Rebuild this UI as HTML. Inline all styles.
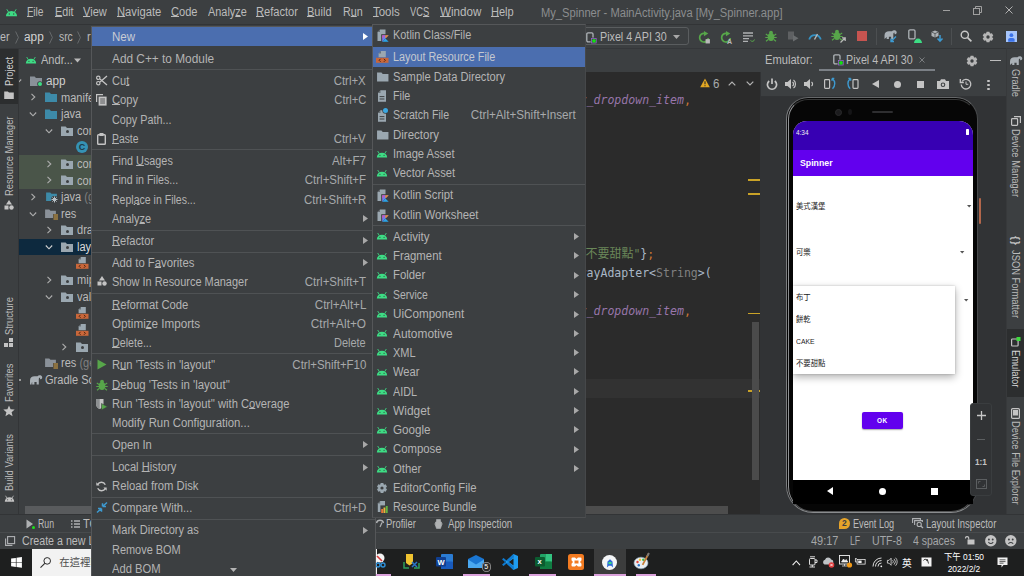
<!DOCTYPE html><html><head><meta charset="utf-8"><title>My_Spinner</title><style>
*{box-sizing:border-box;margin:0;padding:0}
html,body{width:1024px;height:576px;overflow:hidden;background:#3c3f41}
body{font-family:"Liberation Sans","Noto Sans CJK TC",sans-serif;font-size:12px;color:#bbbbbb;position:relative}
.a{position:absolute}
.t{position:absolute;white-space:nowrap;line-height:16px;height:16px}
.r{text-align:right}
u{text-decoration:underline;text-underline-offset:0.2px;text-decoration-thickness:1px}
.sep{position:absolute;height:1px;background:#515355}
.mono{font-family:"DejaVu Sans Mono","Liberation Mono","Noto Sans CJK TC",monospace;font-size:11.55px;letter-spacing:0}
.vt{position:absolute;white-space:nowrap;transform-origin:0 0;font-size:10.5px;line-height:12px;height:12px;letter-spacing:0}
svg{position:absolute;overflow:visible}
</style></head><body>
<svg style="left:5.0px;top:5.5px" width="13" height="13" viewBox="0 0 14 14"><path d="M1 11 A6 5.6 0 0 1 13 11 Z" fill="#3ddc84"/><path d="M3.6 6.2 L2.2 3.9 M10.4 6.2 L11.8 3.9" stroke="#3ddc84" stroke-width="1" stroke-linecap="round"/><circle cx="4.6" cy="8.6" r=".7" fill="#3c3f41"/><circle cx="9.4" cy="8.6" r=".7" fill="#3c3f41"/></svg>
<div class="t " style="left:27px;top:4.3999999999999995px;transform:scaleX(0.8533);transform-origin:0 50%;"><u>F</u>ile</div>
<div class="t " style="left:54.5px;top:4.3999999999999995px;transform:scaleX(0.8947);transform-origin:0 50%;"><u>E</u>dit</div>
<div class="t " style="left:83px;top:4.3999999999999995px;transform:scaleX(0.9207);transform-origin:0 50%;"><u>V</u>iew</div>
<div class="t " style="left:117px;top:4.3999999999999995px;transform:scaleX(0.9343);transform-origin:0 50%;"><u>N</u>avigate</div>
<div class="t " style="left:170.5px;top:4.3999999999999995px;transform:scaleX(0.9237);transform-origin:0 50%;"><u>C</u>ode</div>
<div class="t " style="left:207.5px;top:4.3999999999999995px;transform:scaleX(0.9076);transform-origin:0 50%;">Analy<u>z</u>e</div>
<div class="t " style="left:256px;top:4.3999999999999995px;transform:scaleX(0.9261);transform-origin:0 50%;"><u>R</u>efactor</div>
<div class="t " style="left:307.25px;top:4.3999999999999995px;transform:scaleX(0.9181);transform-origin:0 50%;"><u>B</u>uild</div>
<div class="t " style="left:343px;top:4.3999999999999995px;transform:scaleX(0.8971);transform-origin:0 50%;">R<u>u</u>n</div>
<div class="t " style="left:373px;top:4.3999999999999995px;transform:scaleX(0.9549);transform-origin:0 50%;"><u>T</u>ools</div>
<div class="t " style="left:409.75px;top:4.3999999999999995px;transform:scaleX(0.7801);transform-origin:0 50%;">VC<u>S</u></div>
<div class="t " style="left:439.75px;top:4.3999999999999995px;transform:scaleX(0.9665);transform-origin:0 50%;"><u>W</u>indow</div>
<div class="t " style="left:491px;top:4.3999999999999995px;transform:scaleX(0.9200);transform-origin:0 50%;"><u>H</u>elp</div>
<div class="t " style="left:540.5px;top:4.7px;transform:scaleX(0.9292);transform-origin:0 50%;color:#8b8d8f">My_Spinner - MainActivity.java [My_Spinner.app]</div>
<div class="a" style="left:943px;top:9.6px;width:6.5px;height:1px;background:#a0a0a0;"></div>
<svg style="left:973px;top:5.5px" width="9" height="9" viewBox="0 0 9 9"><rect x="0.5" y="2.5" width="6" height="6" fill="none" stroke="#a0a0a0" stroke-width="1"/><path d="M2.5 2.5 V0.5 H8.5 V6.5 H6.5" fill="none" stroke="#a0a0a0" stroke-width="1"/></svg>
<svg style="left:1004.8px;top:6px" width="7.5" height="7.5" viewBox="0 0 7.5 7.5"><path d="M0.5 0.5 L7.5 7.5 M7.5 0.5 L0.5 7.5" stroke="#b0b0b0" stroke-width="1"/></svg>
<div class="a" style="left:0px;top:24px;width:1024px;height:1px;background:#323436;"></div>
<div class="a" style="left:0px;top:48px;width:1024px;height:0.9px;background:#35373a;"></div>
<div class="t " style="left:0.3px;top:28.999999999999996px;transform:scaleX(0.8903);transform-origin:0 50%;">er</div>
<div class="t " style="left:24.3px;top:28.999999999999996px;transform:scaleX(0.9839);transform-origin:0 50%;color:#d2d2d2">app</div>
<div class="t " style="left:58.5px;top:28.999999999999996px;transform:scaleX(0.8627);transform-origin:0 50%;">src</div>
<div class="t " style="left:86.8px;top:28.999999999999996px;transform:scaleX(0.9200);transform-origin:0 50%;">r</div>
<svg style="left:14.899999999999999px;top:30.8px" width="4" height="13" viewBox="0 0 4 13"><path d="M0.6 0.5 L3.4 6.5 L0.6 12.5" fill="none" stroke="#6a6d6f" stroke-width="0.9"/></svg>
<svg style="left:49px;top:30.8px" width="4" height="13" viewBox="0 0 4 13"><path d="M0.6 0.5 L3.4 6.5 L0.6 12.5" fill="none" stroke="#6a6d6f" stroke-width="0.9"/></svg>
<svg style="left:76.6px;top:30.8px" width="4" height="13" viewBox="0 0 4 13"><path d="M0.6 0.5 L3.4 6.5 L0.6 12.5" fill="none" stroke="#6a6d6f" stroke-width="0.9"/></svg>
<div class="a" style="left:0px;top:48.6px;width:17.5px;height:55.4px;background:#2c2e2f;"></div>
<div class="a" style="left:17.5px;top:48.6px;width:0.9px;height:466px;background:#333537;"></div>
<div class="vt" style="left:3px;top:86px;transform:rotate(-90deg) scaleX(0.89);color:#d0d0d0">Project</div>
<div class="vt" style="left:3px;top:196px;transform:rotate(-90deg) scaleX(0.89);">Resource Manager</div>
<div class="vt" style="left:3px;top:334.5px;transform:rotate(-90deg) scaleX(0.89);">Structure</div>
<div class="vt" style="left:3px;top:402px;transform:rotate(-90deg) scaleX(0.89);">Favorites</div>
<div class="vt" style="left:3px;top:491px;transform:rotate(-90deg) scaleX(0.89);">Build Variants</div>
<svg style="left:4.0px;top:90.5px" width="10" height="8" viewBox="0 0 12 10"><path d="M0 0.5 H4.6 L6 2 H12 V10 H0 Z" fill="#c4c4c4"/></svg>
<svg style="left:4px;top:200px" width="10" height="10" viewBox="0 0 10 10"><path d="M5 0 L8 4.5 H2 Z" fill="#c4c4c4"/><rect x="0.5" y="5.5" width="4" height="4" fill="#c4c4c4"/><circle cx="7.5" cy="7.5" r="2.2" fill="#c4c4c4"/></svg>
<svg style="left:4px;top:338px" width="10" height="9" viewBox="0 0 10 9"><rect x="5" y="0" width="4" height="4" fill="#c4c4c4"/><rect x="0" y="5" width="4" height="4" fill="#c4c4c4"/><rect x="5" y="5" width="4" height="4" fill="#c4c4c4"/></svg>
<svg style="left:3px;top:405px" width="12" height="12" viewBox="0 0 12 12"><path d="M6 0.5 L7.6 4.3 L11.7 4.6 L8.6 7.3 L9.6 11.3 L6 9.1 L2.4 11.3 L3.4 7.3 L0.3 4.6 L4.4 4.3 Z" fill="#c4c4c4"/></svg>
<svg style="left:3.5px;top:492.5px" width="11" height="11" viewBox="0 0 14 14"><path d="M1 11 A6 5.6 0 0 1 13 11 Z" fill="#c4c4c4"/><path d="M3.6 6.2 L2.2 3.9 M10.4 6.2 L11.8 3.9" stroke="#c4c4c4" stroke-width="1" stroke-linecap="round"/><circle cx="4.6" cy="8.6" r=".7" fill="#3c3f41"/><circle cx="9.4" cy="8.6" r=".7" fill="#3c3f41"/></svg>
<svg style="left:25.0px;top:54.0px" width="12" height="12" viewBox="0 0 14 14"><path d="M1 11 A6 5.6 0 0 1 13 11 Z" fill="#3ddc84"/><path d="M3.6 6.2 L2.2 3.9 M10.4 6.2 L11.8 3.9" stroke="#3ddc84" stroke-width="1" stroke-linecap="round"/><circle cx="4.6" cy="8.6" r=".7" fill="#3c3f41"/><circle cx="9.4" cy="8.6" r=".7" fill="#3c3f41"/></svg>
<div class="t " style="left:41px;top:52.2px;transform:scaleX(0.9200);transform-origin:0 50%;font-size:12px;">Andr...</div>
<svg style="left:74px;top:58px" width="7" height="5" viewBox="0 0 7 5"><path d="M0 0.5 H7 L3.5 4.5 Z" fill="#bbbbbb"/></svg>
<div class="a" style="left:19px;top:155px;width:72px;height:34px;background:#4a5549;"></div>
<div class="a" style="left:19px;top:238.5px;width:72px;height:16.5px;background:#0d293e;"></div>
<div class="a" style="left:19px;top:77.7px;width:3px;height:6px;overflow:hidden"><svg style="left:-5px;top:0" width="8" height="6" viewBox="0 0 8 6"><path d="M0.8 1.5 L4 4.8 L7.2 1.5" fill="none" stroke="#adadad" stroke-width="1.1"/></svg></div>
<svg style="left:30.0px;top:75.7px" width="12" height="10" viewBox="0 0 12 10"><path d="M0 0.5 H4.6 L6 2 H12 V10 H0 Z" fill="#8a9199"/></svg>
<div class="a" style="left:37.5px;top:81.9px;width:4.6px;height:4.6px;border-radius:50%;background:#3ddc84;box-shadow:0 0 0 0.8px #3c3f41"></div>
<div class="t " style="left:45.6px;top:72.9px;transform:scaleX(0.9789);transform-origin:0 50%;color:#d0d0d0">app</div>
<svg style="left:30px;top:93.32000000000001px" width="6" height="8" viewBox="0 0 6 8"><path d="M1.5 0.8 L4.8 4 L1.5 7.2" fill="none" stroke="#adadad" stroke-width="1.1"/></svg>
<svg style="left:45.0px;top:92.32000000000001px" width="12" height="10" viewBox="0 0 12 10"><path d="M0 0.5 H4.6 L6 2 H12 V10 H0 Z" fill="#3d8aa8"/></svg>
<div class="t " style="left:61px;top:89.52000000000001px;transform:scaleX(0.9200);transform-origin:0 50%;font-size:12px">manifests</div>
<svg style="left:29px;top:110.94px" width="8" height="6" viewBox="0 0 8 6"><path d="M0.8 1.5 L4 4.8 L7.2 1.5" fill="none" stroke="#adadad" stroke-width="1.1"/></svg>
<svg style="left:45.0px;top:108.94px" width="12" height="10" viewBox="0 0 12 10"><path d="M0 0.5 H4.6 L6 2 H12 V10 H0 Z" fill="#3d8aa8"/></svg>
<div class="t " style="left:61px;top:106.14px;transform:scaleX(0.9200);transform-origin:0 50%;font-size:12px">java</div>
<svg style="left:45px;top:127.56px" width="8" height="6" viewBox="0 0 8 6"><path d="M0.8 1.5 L4 4.8 L7.2 1.5" fill="none" stroke="#adadad" stroke-width="1.1"/></svg>
<svg style="left:61.0px;top:125.56px" width="12" height="10" viewBox="0 0 12 10"><path d="M0 0.5 H4.6 L6 2 H12 V10 H0 Z" fill="#9aa7b0"/></svg>
<div class="a" style="left:65.5px;top:130.06px;width:3px;height:3px;border-radius:50%;background:#3c3f41"></div>
<div class="t " style="left:77px;top:122.76px;transform:scaleX(0.9200);transform-origin:0 50%;font-size:12px">com</div>
<div class="a" style="left:76px;top:141.18px;width:12px;height:12px;border-radius:50%;background:#3592b5;color:#1d3a47;font-size:9px;font-weight:bold;line-height:12px;text-align:center">C</div>
<svg style="left:46px;top:159.8px" width="6" height="8" viewBox="0 0 6 8"><path d="M1.5 0.8 L4.8 4 L1.5 7.2" fill="none" stroke="#adadad" stroke-width="1.1"/></svg>
<svg style="left:61.0px;top:158.8px" width="12" height="10" viewBox="0 0 12 10"><path d="M0 0.5 H4.6 L6 2 H12 V10 H0 Z" fill="#9aa7b0"/></svg>
<div class="a" style="left:65.5px;top:163.3px;width:3px;height:3px;border-radius:50%;background:#3c3f41"></div>
<div class="t " style="left:77px;top:156.0px;transform:scaleX(0.9200);transform-origin:0 50%;font-size:12px">com</div>
<svg style="left:46px;top:176.42000000000002px" width="6" height="8" viewBox="0 0 6 8"><path d="M1.5 0.8 L4.8 4 L1.5 7.2" fill="none" stroke="#adadad" stroke-width="1.1"/></svg>
<svg style="left:61.0px;top:175.42000000000002px" width="12" height="10" viewBox="0 0 12 10"><path d="M0 0.5 H4.6 L6 2 H12 V10 H0 Z" fill="#9aa7b0"/></svg>
<div class="a" style="left:65.5px;top:179.92000000000002px;width:3px;height:3px;border-radius:50%;background:#3c3f41"></div>
<div class="t " style="left:77px;top:172.62px;transform:scaleX(0.9200);transform-origin:0 50%;font-size:12px">com</div>
<svg style="left:30px;top:193.04000000000002px" width="6" height="8" viewBox="0 0 6 8"><path d="M1.5 0.8 L4.8 4 L1.5 7.2" fill="none" stroke="#adadad" stroke-width="1.1"/></svg>
<svg style="left:45.5px;top:192.04000000000002px" width="11" height="9" viewBox="0 0 12 10"><path d="M0 0.5 H4.6 L6 2 H12 V10 H0 Z" fill="#3d8aa8"/></svg>
<svg style="left:51px;top:196.04000000000002px" width="7" height="7" viewBox="0 0 7 7"><circle cx="3.5" cy="3.5" r="3.4" fill="#3c3f41"/><path d="M3.5 0.5 V6.5 M0.5 3.5 H6.5 M1.4 1.4 L5.6 5.6 M5.6 1.4 L1.4 5.6" stroke="#b8c0c6" stroke-width="1"/></svg>
<div class="t " style="left:61px;top:189.24px;transform:scaleX(0.9200);transform-origin:0 50%;font-size:12px">java <span style="color:#808080">(generated)</span></div>
<svg style="left:29px;top:210.66000000000003px" width="8" height="6" viewBox="0 0 8 6"><path d="M0.8 1.5 L4 4.8 L7.2 1.5" fill="none" stroke="#adadad" stroke-width="1.1"/></svg>
<svg style="left:45.0px;top:208.66000000000003px" width="11" height="9" viewBox="0 0 12 10"><path d="M0 0.5 H4.6 L6 2 H12 V10 H0 Z" fill="#8a9199"/></svg>
<svg style="left:53px;top:213.66000000000003px" width="5" height="6" viewBox="0 0 5 6"><rect width="5" height="6" fill="#3c3f41"/><path d="M0.5 1 H5 M0.5 3 H5 M0.5 5 H5" stroke="#d9a343" stroke-width="1.1"/></svg>
<div class="t " style="left:61px;top:205.86px;transform:scaleX(0.9200);transform-origin:0 50%;font-size:12px">res</div>
<svg style="left:46px;top:226.28000000000003px" width="6" height="8" viewBox="0 0 6 8"><path d="M1.5 0.8 L4.8 4 L1.5 7.2" fill="none" stroke="#adadad" stroke-width="1.1"/></svg>
<svg style="left:61.0px;top:225.28000000000003px" width="12" height="10" viewBox="0 0 12 10"><path d="M0 0.5 H4.6 L6 2 H12 V10 H0 Z" fill="#9aa7b0"/></svg>
<div class="a" style="left:65.5px;top:229.78000000000003px;width:3px;height:3px;border-radius:50%;background:#3c3f41"></div>
<div class="t " style="left:77px;top:222.48000000000002px;transform:scaleX(0.9200);transform-origin:0 50%;font-size:12px">drawable</div>
<svg style="left:45px;top:243.90000000000003px" width="8" height="6" viewBox="0 0 8 6"><path d="M0.8 1.5 L4 4.8 L7.2 1.5" fill="none" stroke="#d0d0d0" stroke-width="1.1"/></svg>
<svg style="left:61.0px;top:241.90000000000003px" width="12" height="10" viewBox="0 0 12 10"><path d="M0 0.5 H4.6 L6 2 H12 V10 H0 Z" fill="#9aa7b0"/></svg>
<div class="a" style="left:65.5px;top:246.40000000000003px;width:3px;height:3px;border-radius:50%;background:#3c3f41"></div>
<div class="t " style="left:77px;top:239.10000000000002px;transform:scaleX(0.9200);transform-origin:0 50%;font-size:12px;color:#d8d8d8">layout</div>
<svg style="left:75.8px;top:257.22px" width="12.5" height="12" viewBox="0 0 12.5 12"><path d="M5 0 H9.8 V6.2 H2.6 V2.4 Z" fill="#9aa7b0"/><path d="M5 0 V2.4 H2.6 Z" fill="#3c3f41" opacity=".5"/><rect x="0" y="6.8" width="12.5" height="5" fill="#c9673a"/><path d="M4.6 7.8 L3.1 9.3 L4.6 10.8 M7.9 7.8 L9.4 9.3 L7.9 10.8" stroke="#4a2410" stroke-width="1" fill="none"/></svg>
<svg style="left:46px;top:276.14px" width="6" height="8" viewBox="0 0 6 8"><path d="M1.5 0.8 L4.8 4 L1.5 7.2" fill="none" stroke="#adadad" stroke-width="1.1"/></svg>
<svg style="left:61.0px;top:275.14px" width="12" height="10" viewBox="0 0 12 10"><path d="M0 0.5 H4.6 L6 2 H12 V10 H0 Z" fill="#9aa7b0"/></svg>
<div class="a" style="left:65.5px;top:279.64px;width:3px;height:3px;border-radius:50%;background:#3c3f41"></div>
<div class="t " style="left:77px;top:272.34px;transform:scaleX(0.9200);transform-origin:0 50%;font-size:12px">mipmap</div>
<svg style="left:45px;top:293.76px" width="8" height="6" viewBox="0 0 8 6"><path d="M0.8 1.5 L4 4.8 L7.2 1.5" fill="none" stroke="#adadad" stroke-width="1.1"/></svg>
<svg style="left:61.0px;top:291.76px" width="12" height="10" viewBox="0 0 12 10"><path d="M0 0.5 H4.6 L6 2 H12 V10 H0 Z" fill="#9aa7b0"/></svg>
<div class="a" style="left:65.5px;top:296.26px;width:3px;height:3px;border-radius:50%;background:#3c3f41"></div>
<div class="t " style="left:77px;top:288.96px;transform:scaleX(0.9200);transform-origin:0 50%;font-size:12px">values</div>
<svg style="left:75.8px;top:307.08px" width="12.5" height="12" viewBox="0 0 12.5 12"><path d="M5 0 H9.8 V6.2 H2.6 V2.4 Z" fill="#9aa7b0"/><path d="M5 0 V2.4 H2.6 Z" fill="#3c3f41" opacity=".5"/><rect x="0" y="6.8" width="12.5" height="5" fill="#c9673a"/><path d="M4.6 7.8 L3.1 9.3 L4.6 10.8 M7.9 7.8 L9.4 9.3 L7.9 10.8" stroke="#4a2410" stroke-width="1" fill="none"/></svg>
<svg style="left:75.8px;top:323.7px" width="12.5" height="12" viewBox="0 0 12.5 12"><path d="M5 0 H9.8 V6.2 H2.6 V2.4 Z" fill="#9aa7b0"/><path d="M5 0 V2.4 H2.6 Z" fill="#3c3f41" opacity=".5"/><rect x="0" y="6.8" width="12.5" height="5" fill="#c9673a"/><path d="M4.6 7.8 L3.1 9.3 L4.6 10.8 M7.9 7.8 L9.4 9.3 L7.9 10.8" stroke="#4a2410" stroke-width="1" fill="none"/></svg>
<svg style="left:61px;top:342.62px" width="6" height="8" viewBox="0 0 6 8"><path d="M1.5 0.8 L4.8 4 L1.5 7.2" fill="none" stroke="#adadad" stroke-width="1.1"/></svg>
<svg style="left:76.0px;top:341.62px" width="12" height="10" viewBox="0 0 12 10"><path d="M0 0.5 H4.6 L6 2 H12 V10 H0 Z" fill="#9aa7b0"/></svg>
<div class="a" style="left:80.5px;top:346.12px;width:3px;height:3px;border-radius:50%;background:#3c3f41"></div>
<svg style="left:45.0px;top:358.24px" width="11" height="9" viewBox="0 0 12 10"><path d="M0 0.5 H4.6 L6 2 H12 V10 H0 Z" fill="#8a9199"/></svg>
<svg style="left:53px;top:363.24px" width="5" height="6" viewBox="0 0 5 6"><rect width="5" height="6" fill="#3c3f41"/><path d="M0.5 1 H5 M0.5 3 H5 M0.5 5 H5" stroke="#d9a343" stroke-width="1.1"/></svg>
<div class="t " style="left:61px;top:355.44px;transform:scaleX(0.9200);transform-origin:0 50%;font-size:12px">res <span style="color:#808080">(generated)</span></div>
<div class="a" style="left:19px;top:378.86px;width:1.5px;height:2px;background:#9a9a9a"></div>
<svg style="left:29px;top:374.86px" width="14" height="10" viewBox="0 0 14 10"><path d="M1 9.5 V5.5 C1 2.5 3 1.2 5.5 1.2 H8.5 C9.5 0 12.2 0 13 1.6 C13.8 3.2 12.5 4.6 11.4 4.2 C10.8 4 10.8 3.2 11.4 3 C10.6 2.6 9.8 3.2 9.8 4.2 V9.5 H7.6 V7 H5.4 V9.5 H3.2 V7 C2.6 7.6 2.6 8.5 2.6 9.5 Z" fill="#a9b0b6"/></svg>
<div class="t " style="left:45px;top:372.06px;transform:scaleX(0.9200);transform-origin:0 50%;font-size:12px">Gradle Scripts</div>
<div class="a" style="left:25px;top:506px;width:66px;height:7.5px;background:#595b5d;"></div>
<div class="a" style="left:570px;top:27.3px;width:119px;height:18.2px;border:1px solid #5a5d5f;border-radius:3px"></div>
<svg style="left:585.8px;top:31.5px" width="11" height="12" viewBox="0 0 11 12"><rect x="0.8" y="0.8" width="6.2" height="9" rx="1.2" fill="none" stroke="#aeb3b7" stroke-width="1.3"/><rect x="4.6" y="5.6" width="6.4" height="6.4" fill="#3c3f41"/><rect x="5.6" y="6.4" width="4.6" height="4.6" fill="none" stroke="#9b6bd6" stroke-width="0.7"/><circle cx="8" cy="8.8" r="1.9" fill="#14e014"/></svg>
<div class="t " style="left:599.5px;top:28.8px;transform:scaleX(0.8941);transform-origin:0 50%;">Pixel 4 API 30</div>
<svg style="left:673px;top:34.5px" width="7" height="5" viewBox="0 0 7 5"><path d="M0 0 H7 L3.5 4 Z" fill="#a8a8a8"/></svg>
<svg style="left:697.8px;top:31.1px" width="13" height="13" viewBox="0 0 12 12"><path d="M9.5 6.5 A4 4 0 1 1 6 2.2" fill="none" stroke="#57a64a" stroke-width="1.6"/><path d="M5.5 0 L9.5 2.4 L5.5 4.8 Z" fill="#57a64a"/><rect x="7" y="7.5" width="4" height="4" fill="#b8b8b8"/></svg>
<svg style="left:719.8px;top:31.1px" width="13" height="13" viewBox="0 0 12 12"><path d="M9.5 6.5 A4 4 0 1 1 6 2.2" fill="none" stroke="#57a64a" stroke-width="1.6"/><path d="M5.5 0 L9.5 2.4 L5.5 4.8 Z" fill="#57a64a"/><text x="6.5" y="12" font-size="6.5" font-weight="bold" fill="#b8b8b8" font-family="Liberation Sans,sans-serif">A</text></svg>
<svg style="left:743.3px;top:32px" width="12" height="10" viewBox="0 0 12 10"><path d="M0 1 H10 M0 3.8 H10 M0 6.6 H6 M0 9.4 H5" stroke="#afb1b3" stroke-width="1.3"/><path d="M7.5 8.5 C9 10 11 9.5 11.5 7.5" stroke="#57a64a" stroke-width="1" fill="none"/></svg>
<svg style="left:765px;top:30px" width="12" height="12" viewBox="0 0 12 12"><ellipse cx="6" cy="7" rx="3.3" ry="4" fill="#57a64a"/><circle cx="6" cy="2.6" r="1.9" fill="#57a64a"/><path d="M0.8 4 L3 5.5 M11.2 4 L9 5.5 M0.3 7.5 H3 M11.7 7.5 H9 M1 11.3 L3.2 9.5 M11 11.3 L8.8 9.5" stroke="#57a64a" stroke-width="1.1"/></svg>
<svg style="left:787px;top:30px" width="12" height="12" viewBox="0 0 12 12"><path d="M1 1.5 H7 V9.5 H1 Z" fill="#5e6062"/><path d="M6 5 L11.5 8.2 L6 11.5 Z" fill="#6a6d6f"/></svg>
<svg style="left:808px;top:30px" width="14" height="11" viewBox="0 0 14 11"><path d="M1.2 9.5 A6 6 0 0 1 12.8 9.5" fill="none" stroke="#3592c4" stroke-width="1.8"/><path d="M6.5 9.5 L9.5 4" stroke="#b8b8b8" stroke-width="1.4"/></svg>
<svg style="left:831px;top:29px" width="12" height="12" viewBox="0 0 12 12"><ellipse cx="6" cy="7" rx="3.3" ry="4" fill="#57a64a"/><circle cx="6" cy="2.6" r="1.9" fill="#57a64a"/><path d="M0.8 4 L3 5.5 M11.2 4 L9 5.5 M0.3 7.5 H3 M11.7 7.5 H9 M1 11.3 L3.2 9.5 M11 11.3 L8.8 9.5" stroke="#57a64a" stroke-width="1.1"/></svg>
<svg style="left:840px;top:37px" width="6" height="6" viewBox="0 0 6 6"><path d="M0.5 5.5 L5 1 M2 0.8 H5.2 V4" stroke="#b8b8b8" stroke-width="1.3" fill="none"/></svg>
<div class="a" style="left:857px;top:31px;width:10px;height:10px;background:#c75450;"></div>
<div class="a" style="left:876px;top:28px;width:1px;height:17px;background:#4c4f51;"></div>
<svg style="left:884px;top:30px" width="14" height="12" viewBox="0 0 14 12"><path d="M0.5 9 V5.5 C0.5 2.5 2.5 1.2 5 1.2 H8 C9 0 11.7 0 12.5 1.6 C13.3 3.2 12 4.6 10.9 4.2 C10.3 4 10.3 3.2 10.9 3 C10.1 2.6 9.3 3.2 9.3 4.2 V9 H7.1 V6.8 H4.9 V9 H2.7 V7 Z" fill="#a9b0b6"/><path d="M7 11.5 L12 6.5 M7 8.5 V11.5 H10" stroke="#3d9ad1" stroke-width="1.4" fill="none"/></svg>
<svg style="left:908px;top:29px" width="11" height="12" viewBox="0 0 11 12"><rect x="0.8" y="0.8" width="6.2" height="9" rx="1.2" fill="none" stroke="#aeb3b7" stroke-width="1.3"/></svg>
<svg style="left:914px;top:37px" width="8" height="6" viewBox="0 0 8 6"><path d="M0 6 A4 4.4 0 0 1 8 6 Z" fill="#3ddc84"/></svg>
<svg style="left:931px;top:30px" width="12" height="12" viewBox="0 0 12 12"><path d="M4 0.5 L7.5 2 V6 L4 7.5 L0.5 6 V2 Z" fill="#aeb3b7"/><path d="M4 3.6 V7.5 M0.5 2 L4 3.6 L7.5 2" stroke="#3c3f41" stroke-width="0.7" fill="none"/><path d="M9 5 V11 M6.5 8.5 L9 11.2 L11.5 8.5" stroke="#3d9ad1" stroke-width="1.5" fill="none"/></svg>
<div class="a" style="left:951px;top:28px;width:1px;height:17px;background:#4c4f51;"></div>
<svg style="left:960px;top:30.3px" width="13" height="13" viewBox="0 0 13 13"><circle cx="4.8" cy="4.8" r="3.6" fill="none" stroke="#c8c8c8" stroke-width="1.4"/><path d="M7.6 7.6 L11.4 11.4" stroke="#c8c8c8" stroke-width="1.7"/></svg>
<svg style="left:988.3px;top:36.6px" width="1" height="1" viewBox="0 0 1 1"><g><path d="M-2.12 -2.92 L-1.38 -5.30 H1.38 L2.12 -2.92 Z" fill="#b6b6b6" transform="rotate(0)"/><path d="M-2.12 -2.92 L-1.38 -5.30 H1.38 L2.12 -2.92 Z" fill="#b6b6b6" transform="rotate(60)"/><path d="M-2.12 -2.92 L-1.38 -5.30 H1.38 L2.12 -2.92 Z" fill="#b6b6b6" transform="rotate(120)"/><path d="M-2.12 -2.92 L-1.38 -5.30 H1.38 L2.12 -2.92 Z" fill="#b6b6b6" transform="rotate(180)"/><path d="M-2.12 -2.92 L-1.38 -5.30 H1.38 L2.12 -2.92 Z" fill="#b6b6b6" transform="rotate(240)"/><path d="M-2.12 -2.92 L-1.38 -5.30 H1.38 L2.12 -2.92 Z" fill="#b6b6b6" transform="rotate(300)"/><circle r="3.71" fill="#b6b6b6"/><circle r="1.70" fill="#3c3f41"/></g></svg>
<div class="a" style="left:1006px;top:31.2px;width:10.8px;height:10.8px;background:#a6c5fb;"></div>
<svg style="left:1006px;top:31.2px" width="10.8" height="10.8" viewBox="0 0 10.8 10.8"><circle cx="5.4" cy="4.2" r="1.9" fill="#3b73ea"/><path d="M2.2 10.8 V8.4 C2.2 6.6 8.6 6.6 8.6 8.4 V10.8 Z" fill="#3b73ea"/></svg>
<div class="a" style="left:586px;top:71.8px;width:174px;height:442.2px;background:#2b2b2b;"></div>
<div class="a" style="left:586px;top:379px;width:174px;height:18.5px;background:#323232;"></div>
<div class="a" style="left:760px;top:72px;width:1px;height:442px;background:#313335;"></div>
<svg style="left:700.3px;top:78.2px" width="10" height="10" viewBox="0 0 10 10"><path d="M5 0.5 L9.8 9.2 H0.2 Z" fill="#e3a823"/><path d="M5 3.3 V6.3 M5 7.2 V8.3" stroke="#2b2b2b" stroke-width="1.1"/></svg>
<div class="t " style="left:712.8px;top:75.8px;transform:scaleX(0.9200);transform-origin:0 50%;font-size:12.5px;color:#a9abad">6</div>
<svg style="left:728px;top:81px" width="8" height="5" viewBox="0 0 8 5"><path d="M0.7 4.3 L4 1 L7.3 4.3" fill="none" stroke="#b4b4b4" stroke-width="1.2"/></svg>
<svg style="left:746px;top:81px" width="8" height="5" viewBox="0 0 8 5"><path d="M0.7 0.7 L4 4 L7.3 0.7" fill="none" stroke="#b4b4b4" stroke-width="1.2"/></svg>
<div class="t mono" style="left:579.6px;top:92.0px;"><span style="color:#9876aa;font-style:italic">r_dropdown_item</span><span style="color:#cc7832">,</span></div>
<div class="t mono" style="left:585.4px;top:245.7px;"><span style="color:#6a8759"><span style="font-size:12px">不要甜點</span>"</span><span style="color:#a9b7c6">}</span><span style="color:#cc7832">;</span></div>
<div class="t mono" style="left:579.6px;top:264.9px;"><span style="color:#a9b7c6">rayAdapter&lt;</span><span style="color:#808080">String</span><span style="color:#a9b7c6">&gt;(</span></div>
<div class="t mono" style="left:579.6px;top:303.2px;"><span style="color:#9876aa;font-style:italic">r_dropdown_item</span><span style="color:#cc7832">,</span></div>
<div class="a" style="left:748px;top:179.3px;width:12px;height:1.6px;background:#c9a227;"></div>
<div class="a" style="left:748px;top:193.3px;width:12px;height:1.6px;background:#c9a227;"></div>
<div class="a" style="left:748px;top:312.8px;width:12px;height:1.6px;background:#c9a227;"></div>
<div class="a" style="left:748px;top:390.3px;width:12px;height:1.6px;background:#c9a227;"></div>
<div class="a" style="left:752px;top:322px;width:7px;height:158px;background:#4b4b4b;"></div>
<div class="a" style="left:586px;top:506px;width:141.5px;height:7.5px;background:#4d4d4d;"></div>
<div class="a" style="left:761px;top:48px;width:246px;height:1px;background:#323436;"></div>
<div class="a" style="left:761px;top:96px;width:246px;height:1px;background:#323436;"></div>
<div class="t " style="left:765.3px;top:52.2px;transform:scaleX(0.9289);transform-origin:0 50%;">Emulator:</div>
<svg style="left:833px;top:54px" width="11" height="12" viewBox="0 0 11 12"><rect x="0.8" y="0.8" width="6.2" height="9" rx="1.2" fill="none" stroke="#aeb3b7" stroke-width="1.3"/><rect x="4.6" y="5.6" width="6.4" height="6.4" fill="#3c3f41"/><rect x="5.6" y="6.4" width="4.6" height="4.6" fill="none" stroke="#9b6bd6" stroke-width="0.7"/><circle cx="8" cy="8.8" r="1.9" fill="#14e014"/></svg>
<div class="t " style="left:845.5px;top:52.2px;transform:scaleX(0.8941);transform-origin:0 50%;">Pixel 4 API 30</div>
<svg style="left:919px;top:57px" width="6" height="6" viewBox="0 0 6 6"><path d="M0.5 0.5 L5.5 5.5 M5.5 0.5 L0.5 5.5" stroke="#7a7d7f" stroke-width="1"/></svg>
<div class="a" style="left:819px;top:69px;width:116px;height:2.4px;background:#7b8086;"></div>
<svg style="left:972.3px;top:60.5px" width="1" height="1" viewBox="0 0 1 1"><g><path d="M-2.12 -2.92 L-1.38 -5.30 H1.38 L2.12 -2.92 Z" fill="#b6b6b6" transform="rotate(0)"/><path d="M-2.12 -2.92 L-1.38 -5.30 H1.38 L2.12 -2.92 Z" fill="#b6b6b6" transform="rotate(60)"/><path d="M-2.12 -2.92 L-1.38 -5.30 H1.38 L2.12 -2.92 Z" fill="#b6b6b6" transform="rotate(120)"/><path d="M-2.12 -2.92 L-1.38 -5.30 H1.38 L2.12 -2.92 Z" fill="#b6b6b6" transform="rotate(180)"/><path d="M-2.12 -2.92 L-1.38 -5.30 H1.38 L2.12 -2.92 Z" fill="#b6b6b6" transform="rotate(240)"/><path d="M-2.12 -2.92 L-1.38 -5.30 H1.38 L2.12 -2.92 Z" fill="#b6b6b6" transform="rotate(300)"/><circle r="3.71" fill="#b6b6b6"/><circle r="1.70" fill="#3c3f41"/></g></svg>
<div class="a" style="left:990.3px;top:60px;width:10.6px;height:1.2px;background:#bdbdbd;"></div>
<svg style="left:766px;top:78px" width="12" height="12" viewBox="0 0 12 12"><path d="M3.2 3 A4.6 4.6 0 1 0 8.8 3" fill="none" stroke="#c4c4c4" stroke-width="1.7"/><path d="M6 0.5 V6" stroke="#c4c4c4" stroke-width="1.7"/></svg>
<svg style="left:785px;top:79px" width="13" height="10" viewBox="0 0 13 10"><path d="M0 3 H2.5 L6 0 V10 L2.5 7 H0 Z" fill="#c4c4c4"/><path d="M7.5 3 A2.4 2.4 0 0 1 7.5 7 M8.5 1 A5 5 0 0 1 8.5 9" fill="none" stroke="#c4c4c4" stroke-width="1.2"/></svg>
<svg style="left:804px;top:79px" width="10" height="10" viewBox="0 0 10 10"><path d="M0 3 H2.5 L6 0 V10 L2.5 7 H0 Z" fill="#c4c4c4"/><path d="M7.5 3 A2.4 2.4 0 0 1 7.5 7" fill="none" stroke="#c4c4c4" stroke-width="1.2"/></svg>
<svg style="left:824px;top:78px" width="13" height="12" viewBox="0 0 13 12"><rect x="0.6" y="1.6" width="5" height="8.8" rx="0.8" fill="none" stroke="#c4c4c4" stroke-width="1.2"/><path d="M8.5 1 C11.5 3 11.5 8 8.5 10.8 M8 0.5 H10.3 M8 0.5 V2.8" fill="none" stroke="#3d9ad1" stroke-width="1.4"/></svg>
<svg style="left:846px;top:78px" width="13" height="12" viewBox="0 0 13 12"><rect x="7" y="1.6" width="5" height="8.8" rx="0.8" fill="none" stroke="#c4c4c4" stroke-width="1.2"/><path d="M4.2 1 C1.2 3 1.2 8 4.2 10.8 M4.7 0.5 H2.4 M4.7 0.5 V2.8" fill="none" stroke="#3d9ad1" stroke-width="1.4"/></svg>
<svg style="left:872px;top:80px" width="7" height="8" viewBox="0 0 7 8"><path d="M7 0 V8 L0 4 Z" fill="#c4c4c4"/></svg>
<div class="a" style="left:894px;top:81px;width:7px;height:7px;border-radius:50%;background:#c4c4c4"></div>
<div class="a" style="left:917px;top:81px;width:7px;height:7px;background:#c4c4c4;"></div>
<svg style="left:937px;top:79px" width="12" height="10" viewBox="0 0 12 10"><path d="M0 2 H3 L4 0.3 H8 L9 2 H12 V10 H0 Z" fill="#c4c4c4"/><circle cx="6" cy="5.8" r="2.3" fill="#3c3f41"/><circle cx="6" cy="5.8" r="1.2" fill="#c4c4c4"/></svg>
<svg style="left:960px;top:78px" width="12" height="12" viewBox="0 0 12 12"><path d="M2 3.5 A4.8 4.8 0 1 1 1.2 6.5" fill="none" stroke="#c4c4c4" stroke-width="1.3"/><path d="M0.3 1 V4.5 H3.8" fill="none" stroke="#c4c4c4" stroke-width="1.3"/><path d="M6 3.5 V6.3 H8.3" fill="none" stroke="#c4c4c4" stroke-width="1"/></svg>
<div class="a" style="left:987.3px;top:79.5px;width:2.6px;height:2.6px;border-radius:50%;background:#c4c4c4"></div>
<div class="a" style="left:987.3px;top:83.5px;width:2.6px;height:2.6px;border-radius:50%;background:#c4c4c4"></div>
<div class="a" style="left:987.3px;top:87.5px;width:2.6px;height:2.6px;border-radius:50%;background:#c4c4c4"></div>
<div class="a" style="left:761px;top:97px;width:245px;height:417px;background:#313335;"></div>
<div class="a" style="left:786.4px;top:96.7px;width:191.3px;height:416.6px;border-radius:22px 22px 27px 27px;background:#060606;border:1px solid #66686a;border-left-color:#7c7e80;border-right-color:#47494b;border-bottom-color:#8a8c8e"><div class="a" style="left:1px;top:1px;right:1px;bottom:0.6px;border-radius:20px 20px 25px 25px;border:1px solid rgba(150,152,154,0);border-left-color:#909294;border-top-color:rgba(150,152,154,.35);border-bottom-color:rgba(160,162,164,.5)"></div></div>
<div class="a" style="left:979px;top:198px;width:2.2px;height:26px;background:#b3674b;border-radius:1px"></div>
<div class="a" style="left:835px;top:108.5px;width:7px;height:7px;border-radius:50%;background:#1c1c1e;border:1px solid #2a2a2c"></div>
<div class="a" style="left:848px;top:109px;width:4px;height:6px;border-radius:50%;background:#151517"></div>
<div class="a" style="left:872px;top:111px;width:21px;height:2px;background:#2e2e30;border-radius:1px"></div>
<div class="a" style="left:792.5px;top:121px;width:180.5px;height:359px;background:#fff;border-radius:14px 14px 0 0;overflow:hidden"><div class="a" style="left:0;top:0;width:181px;height:28.6px;background:#3700b3"></div><div class="a" style="left:0;top:28.6px;width:181px;height:26px;background:#6200ee"></div></div>
<div class="t " style="left:796px;top:124.8px;transform:scaleX(0.9445);transform-origin:0 50%;font-size:6.8px;color:#f0f0f0">4:34</div>
<div class="a" style="left:965.7px;top:129px;width:3.5px;height:6px;background:#fff;border-radius:0.8px 0.8px 0.4px 0.4px"></div>
<div class="t " style="left:800px;top:155.2px;transform:scaleX(0.9200);transform-origin:0 50%;font-size:9.5px;color:#fff;font-weight:bold;">Spinner</div>
<div class="t " style="left:796px;top:199.2px;transform:scaleX(0.9200);transform-origin:0 50%;font-family:'Liberation Sans','Noto Sans CJK TC',sans-serif;color:#1a1a1a;font-size:8px">美式漢堡</div>
<div class="t " style="left:796px;top:245.2px;transform:scaleX(0.9200);transform-origin:0 50%;font-family:'Liberation Sans','Noto Sans CJK TC',sans-serif;color:#1a1a1a;font-size:8px">可樂</div>
<svg style="left:967.3px;top:205px" width="4.4" height="2.4" viewBox="0 0 4.4 2.4"><path d="M0 0 H4.4 L2.2 2.4 Z" fill="#555"/></svg>
<svg style="left:960.0999999999999px;top:251px" width="4.4" height="2.4" viewBox="0 0 4.4 2.4"><path d="M0 0 H4.4 L2.2 2.4 Z" fill="#555"/></svg>
<svg style="left:964.0999999999999px;top:299px" width="4.4" height="2.4" viewBox="0 0 4.4 2.4"><path d="M0 0 H4.4 L2.2 2.4 Z" fill="#555"/></svg>
<div class="a" style="left:793px;top:286px;width:162px;height:88px;background:#fff;box-shadow:0 3px 8px rgba(0,0,0,.32),0 0 2px rgba(0,0,0,.2)"></div>
<div class="t " style="left:796px;top:290.2px;transform:scaleX(0.9200);transform-origin:0 50%;font-family:'Liberation Sans','Noto Sans CJK TC',sans-serif;color:#1a1a1a;font-size:8px">布丁</div>
<div class="t " style="left:796px;top:312.2px;transform:scaleX(0.9200);transform-origin:0 50%;font-family:'Liberation Sans','Noto Sans CJK TC',sans-serif;color:#1a1a1a;font-size:8px">餅乾</div>
<div class="t " style="left:796.3px;top:334.2px;transform:scaleX(0.8492);transform-origin:0 50%;font-family:'Liberation Sans','Noto Sans CJK TC',sans-serif;color:#1a1a1a;font-size:8px">CAKE</div>
<div class="t " style="left:796px;top:356.2px;transform:scaleX(0.9200);transform-origin:0 50%;font-family:'Liberation Sans','Noto Sans CJK TC',sans-serif;color:#1a1a1a;font-size:8px">不要甜點</div>
<div class="a" style="left:862px;top:412px;width:40.5px;height:17px;background:#6200ee;border-radius:2px;box-shadow:0 1px 1.5px rgba(0,0,0,.35);color:#fff;font-size:6.5px;font-weight:bold;text-align:center;line-height:17.5px;letter-spacing:0.3px">OK</div>
<div class="a" style="left:792.5px;top:480px;width:180.5px;height:24px;background:#000;"></div>
<svg style="left:827px;top:487px" width="6" height="8" viewBox="0 0 6 8"><path d="M6 0 V8 L0 4 Z" fill="#fff"/></svg>
<div class="a" style="left:879px;top:487.5px;width:7px;height:7px;border-radius:50%;background:#fff"></div>
<div class="a" style="left:931px;top:487.5px;width:7px;height:7px;background:#fff;"></div>
<div class="a" style="left:970px;top:403px;width:22px;height:93px;background:#313335;border-radius:3px;border:1px solid #3a3d3f"></div>
<svg style="left:976.5px;top:411px" width="9" height="9" viewBox="0 0 9 9"><path d="M4.5 0 V9 M0 4.5 H9" stroke="#c8c8c8" stroke-width="1.3"/></svg>
<div class="a" style="left:977px;top:438.5px;width:8px;height:1.2px;background:#5c5f61;"></div>
<div class="t " style="left:975px;top:454.2px;transform:scaleX(0.9200);transform-origin:0 50%;font-size:9px;font-weight:bold;color:#c4c4c4;">1:1</div>
<svg style="left:976px;top:479px" width="11" height="10" viewBox="0 0 11 10"><rect x="0.5" y="0.5" width="10" height="9" fill="none" stroke="#5c5f61" stroke-width="1"/><path d="M2.5 4.5 V2.5 H4.5 M8.5 5.5 V7.5 H6.5" fill="none" stroke="#5c5f61" stroke-width="0.9"/></svg>
<div class="a" style="left:1006px;top:48px;width:1px;height:467px;background:#37393b;"></div>
<div class="a" style="left:1006.5px;top:329px;width:17.5px;height:68px;background:#2c2e2f;"></div>
<svg style="left:1009px;top:56px" width="13" height="9" viewBox="0 0 13 9"><path d="M1 9 V5.5 C1 2.5 3 1.2 5.5 1.2 H8.5 C9.5 0 12.2 0 13 1.6 C13.8 3.2 12.5 4.6 11.4 4.2 C10.8 4 10.8 3.2 11.4 3 C10.6 2.6 9.8 3.2 9.8 4.2 V9 H7.6 V6.8 H5.4 V9 H3.2 V7 Z" fill="#a9b0b6"/></svg>
<div class="vt" style="left:1022px;top:69px;transform:rotate(90deg) scaleX(0.89);">Gradle</div>
<svg style="left:1011px;top:116px" width="10" height="10" viewBox="0 0 10 10"><rect x="0.6" y="2.6" width="6" height="6.8" rx="0.8" fill="none" stroke="#c4c4c4" stroke-width="1.2"/><path d="M3 0.6 H9.4 V7" fill="none" stroke="#c4c4c4" stroke-width="1.2"/></svg>
<div class="vt" style="left:1022px;top:129px;transform:rotate(90deg) scaleX(0.89);">Device Manager</div>
<div class="vt" style="left:1021px;top:236px;transform:rotate(90deg);font-size:10px;font-weight:bold;color:#c4c4c4;letter-spacing:1px">{}</div>
<div class="vt" style="left:1022px;top:250px;transform:rotate(90deg) scaleX(0.89);">JSON Formatter</div>
<svg style="left:1011px;top:337px" width="10" height="10" viewBox="0 0 10 10"><rect x="0.6" y="2" width="6.5" height="7" rx="0.8" fill="none" stroke="#c4c4c4" stroke-width="1.2"/><rect x="5.5" y="0" width="4" height="4" fill="#3ddc3d"/></svg>
<div class="vt" style="left:1022px;top:350px;transform:rotate(90deg) scaleX(0.89);color:#d4d4d4">Emulator</div>
<svg style="left:1011px;top:408px" width="9" height="11" viewBox="0 0 9 11"><rect x="0.6" y="0.6" width="7.8" height="9.8" rx="1" fill="none" stroke="#c4c4c4" stroke-width="1.2"/><rect x="2" y="2" width="5" height="5.5" fill="#c4c4c4"/></svg>
<div class="vt" style="left:1022px;top:421px;transform:rotate(90deg) scaleX(0.89);">Device File Explorer</div>
<div class="a" style="left:0px;top:514px;width:1024px;height:1px;background:#323436;"></div>
<div class="a" style="left:0px;top:532px;width:1024px;height:1px;background:#484b4d;"></div>
<svg style="left:26px;top:518.5px" width="8" height="10" viewBox="0 0 8 10"><path d="M0.5 0.5 L7 5 L0.5 9.5 Z" fill="#afb1b3"/></svg>
<div class="a" style="left:31.8px;top:525.5px;width:3.5px;height:3.5px;border-radius:50%;background:#1be01b;box-shadow:0 0 0 0.6px #3c3f41"></div>
<div class="t " style="left:38.2px;top:516.0px;transform:scaleX(0.7268);transform-origin:0 50%;">Run</div>
<svg style="left:71px;top:519.5px" width="9" height="8" viewBox="0 0 9 8"><path d="M0 1 H1.5 M3 1 H9 M0 4 H1.5 M3 4 H9 M0 7 H1.5 M3 7 H9" stroke="#afb1b3" stroke-width="1.3"/></svg>
<div class="t " style="left:83px;top:516.0px;transform:scaleX(0.9200);transform-origin:0 50%;">TODO</div>
<svg style="left:376px;top:519px" width="8" height="9" viewBox="0 0 8 9"><path d="M0.5 4 A3.6 3.6 0 0 1 7.5 4" fill="none" stroke="#afb1b3" stroke-width="1.4"/><path d="M4 8 L6 3.5" stroke="#afb1b3" stroke-width="1.2"/></svg>
<div class="t " style="left:386px;top:516.0px;transform:scaleX(0.7840);transform-origin:0 50%;">Profiler</div>
<svg style="left:434px;top:518.5px" width="9" height="10" viewBox="0 0 9 10"><path d="M1.5 3 H7.5 V6.5 H1.5 Z M2.5 0.5 H6.5 V3 H2.5 Z M0 5 H9 M1.5 6.5 L2.5 9.5 H6.5 L7.5 6.5 Z" fill="#afb1b3" stroke="#afb1b3" stroke-width="0.6"/></svg>
<div class="t " style="left:447.6px;top:516.0px;transform:scaleX(0.8087);transform-origin:0 50%;">App Inspection</div>
<div class="a" style="left:838.5px;top:517.5px;width:11.5px;height:11.5px;border-radius:50% 50% 50% 0;background:#e6a42a;color:#3c3f41;font-size:8.5px;line-height:11.5px;text-align:center;font-weight:bold;letter-spacing:0">2</div>
<div class="t " style="left:852.7px;top:516.0px;transform:scaleX(0.7624);transform-origin:0 50%;">Event Log</div>
<svg style="left:912px;top:518px" width="12" height="10" viewBox="0 0 12 10"><path d="M0.6 5 V0.6 H8.4 V2" fill="none" stroke="#afb1b3" stroke-width="1.1"/><path d="M2.6 7 V2.6 H10.4 V4" fill="none" stroke="#afb1b3" stroke-width="1.1"/><circle cx="7.2" cy="6.4" r="2.1" fill="none" stroke="#afb1b3" stroke-width="1.1"/><path d="M8.8 8 L11 10" stroke="#afb1b3" stroke-width="1.3"/></svg>
<div class="t " style="left:926px;top:516.0px;transform:scaleX(0.7923);transform-origin:0 50%;">Layout Inspector</div>
<svg style="left:5px;top:535.5px" width="10" height="10" viewBox="0 0 10 10"><rect x="2.6" y="0.6" width="7" height="7" fill="none" stroke="#afb1b3" stroke-width="1.1"/><path d="M0.6 2.6 V9.4 H7.4" fill="none" stroke="#afb1b3" stroke-width="1.1"/></svg>
<div class="t " style="left:21.9px;top:533.2px;transform:scaleX(0.8900);transform-origin:0 50%;">Create a new Layout resource file</div>
<div class="t " style="left:811px;top:533.0px;transform:scaleX(0.8759);transform-origin:0 50%;font-size:12.5px;color:#a4a6a8">49:17</div>
<div class="t " style="left:850.3px;top:533.0px;transform:scaleX(0.6992);transform-origin:0 50%;font-size:12.5px;color:#a4a6a8">LF</div>
<div class="t " style="left:872px;top:533.0px;transform:scaleX(0.8471);transform-origin:0 50%;font-size:12.5px;color:#a4a6a8">UTF-8</div>
<div class="t " style="left:912.7px;top:533.0px;transform:scaleX(0.8375);transform-origin:0 50%;font-size:12.5px;color:#a4a6a8">4 spaces</div>
<svg style="left:965px;top:535.3px" width="10" height="10" viewBox="0 0 10 10"><rect x="2.5" y="4.5" width="7" height="5" fill="#c4c4c4"/><path d="M3.7 4.5 V2.8 A1.7 1.7 0 0 0 0.5 2.8 V3.6" fill="none" stroke="#c4c4c4" stroke-width="1.1"/></svg>
<svg style="left:984.9000000000001px;top:534.8000000000001px" width="11.6" height="11.6" viewBox="0 0 11 11"><circle cx="5.5" cy="5.5" r="5.4" fill="#c4c4c4"/><circle cx="3.7" cy="4.2" r="0.9" fill="#3c3f41"/><circle cx="7.3" cy="4.2" r="0.9" fill="#3c3f41"/><path d="M3.2 6.8 Q5.5 9.4 7.8 6.8" fill="none" stroke="#3c3f41" stroke-width="1"/></svg>
<svg style="left:1005.0px;top:534.8000000000001px" width="11.6" height="11.6" viewBox="0 0 11 11"><circle cx="5.5" cy="5.5" r="5.4" fill="#c4c4c4"/><circle cx="3.7" cy="4.2" r="0.9" fill="#3c3f41"/><circle cx="7.3" cy="4.2" r="0.9" fill="#3c3f41"/><path d="M3.2 8.3 Q5.5 5.9 7.8 8.3" fill="none" stroke="#3c3f41" stroke-width="1"/></svg>
<div class="a" style="left:0px;top:549px;width:1024px;height:27px;background:#1e1f1f;"></div>
<svg style="left:10.5px;top:557px" width="11" height="10.8" viewBox="0 0 12 12"><path d="M0 1.7 L5.3 1 V5.7 H0 Z M6 0.9 L12 0 V5.7 H6 Z M0 6.4 H5.3 V11.1 L0 10.4 Z M6 6.4 H12 V12 L6 11.2 Z" fill="#fff"/></svg>
<div class="a" style="left:31.8px;top:549.2px;width:345px;height:26.8px;background:#f2f2f2;"></div>
<svg style="left:40px;top:557px" width="11" height="11" viewBox="0 0 11 11"><circle cx="7.2" cy="3.9" r="3.3" fill="none" stroke="#2a2a2a" stroke-width="1"/><path d="M4.8 6.4 L0.5 10.6" stroke="#2a2a2a" stroke-width="1.1"/></svg>
<div class="t " style="left:59.3px;top:555.2px;transform:scaleX(1.0000);transform-origin:0 50%;font-size:10.4px;color:#4c4c4c">在這裡輸入文字來搜尋</div>
<svg style="left:374px;top:553px" width="14" height="16" viewBox="0 0 14 16"><circle cx="6" cy="5" r="4.5" fill="#f4f4f4"/><path d="M3 3 L8 8" stroke="#d23a3a" stroke-width="1.6"/><circle cx="4" cy="12" r="2" fill="none" stroke="#2f8fd6" stroke-width="1.4"/><circle cx="9" cy="12" r="2" fill="none" stroke="#2f8fd6" stroke-width="1.4"/></svg>
<div class="a" style="left:372px;top:574px;width:19px;height:2px;background:#dba2dc;"></div>
<svg style="left:403px;top:553px" width="17" height="17" viewBox="0 0 17 17"><path d="M3 1 H10 V10 L6.5 12.5 L3 10 Z" fill="#f0c330"/><path d="M1 9 V15 H6 M11 15 H16 V10" fill="none" stroke="#2e9e5b" stroke-width="1.5"/><path d="M9 9 L14 14 M14 9 L9 14" stroke="#2a74c9" stroke-width="1.5"/></svg>
<svg style="left:436px;top:554px" width="17" height="15" viewBox="0 0 17 15"><rect x="5" y="0" width="12" height="15" rx="1" fill="#2b7cd3"/><rect x="5" y="7.5" width="12" height="7.5" rx="1" fill="#185abd"/><rect x="0" y="3" width="10" height="9.5" rx="1" fill="#103f91"/><text x="1.6" y="10.6" font-size="7.5" font-weight="bold" fill="#fff" font-family="Liberation Sans,sans-serif">W</text></svg>
<svg style="left:468px;top:555px" width="18" height="13" viewBox="0 0 18 13"><path d="M0 4 L8 0 L16 4 V13 H0 Z" fill="#1a76d2"/><path d="M0 4.5 L8 9.5 L16 4.5 V13 H0 Z" fill="#4aa8f0"/></svg>
<div class="a" style="left:481.5px;top:562px;width:9.5px;height:9.5px;border-radius:50%;background:#2a2a2a;box-shadow:inset 0 0 0 0.8px #9a9a9a;color:#fff;font-size:7px;line-height:9.5px;text-align:center;letter-spacing:0">5</div>
<div class="a" style="left:463px;top:574px;width:27px;height:2px;background:#dba2dc;"></div>
<svg style="left:502px;top:554px" width="16" height="16" viewBox="0 0 16 16"><path d="M11.5 0 L16 2 V14 L11.5 16 L3 8 Z" fill="#1f9cf0"/><path d="M11.5 4.5 V11.5 L6.8 8 Z" fill="#1e1f1f"/><path d="M0 5.2 L1.6 4 L12 12.8 L11.5 16 Z M0 10.8 L1.6 12 L12 3.2 L11.5 0 Z" fill="#0e7ad0"/></svg>
<svg style="left:535px;top:554px" width="17" height="15" viewBox="0 0 17 15"><rect x="5" y="0" width="12" height="15" rx="1" fill="#21a366"/><rect x="11" y="0" width="6" height="7.5" fill="#33c481"/><rect x="5" y="7.5" width="12" height="7.5" rx="1" fill="#107c41"/><rect x="0" y="3" width="10" height="9.5" rx="1" fill="#0b5c30"/><text x="2.6" y="10.4" font-size="7.5" font-weight="bold" fill="#fff" font-family="Liberation Sans,sans-serif">x</text></svg>
<div class="a" style="left:529px;top:574px;width:27px;height:2px;background:#dba2dc;"></div>
<div class="a" style="left:568px;top:554px;width:16px;height:16px;border-radius:2.5px;background:#f37b21"></div>
<svg style="left:570.5px;top:557px" width="11" height="10" viewBox="0 0 11 10"><path d="M1.5 0.5 H4 L5.5 2 L7 0.5 H9.5 Q10.5 0.5 10.5 1.5 V3.3 L9 5 L10.5 6.7 V8.5 Q10.5 9.5 9.5 9.5 H7 L5.5 8 L4 9.5 H1.5 Q0.5 9.5 0.5 8.5 V6.7 L2 5 L0.5 3.3 V1.5 Q0.5 0.5 1.5 0.5 Z" fill="#fff"/><path d="M3.5 3.5 H7.5 V6.5 H3.5 Z" fill="#f37b21"/></svg>
<div class="a" style="left:593.5px;top:549px;width:32px;height:27px;background:#3c3d3d;"></div>
<div class="a" style="left:602px;top:555px;width:15px;height:15px;border-radius:50%;background:#f4f6f7"></div>
<svg style="left:605.5px;top:558.5px" width="8" height="9" viewBox="0 0 8 9"><path d="M1 8.5 L1.5 2.5 L4 0.3 L6.5 2.5 L7 8.5 L5.2 6.8 H2.8 Z" fill="#2d6bd6"/><path d="M2.5 3 H5.5 V5 H2.5 Z" fill="#3ddc84"/></svg>
<div class="a" style="left:593.5px;top:574px;width:32px;height:2px;background:#dba2dc;"></div>
<svg style="left:634px;top:553px" width="16" height="17" viewBox="0 0 16 17"><ellipse cx="7" cy="10" rx="7" ry="5.8" fill="#e9eef2" stroke="#8aa4b8" stroke-width="0.6"/><circle cx="3.5" cy="9" r="1.2" fill="#e04a3f"/><circle cx="6" cy="6.8" r="1.2" fill="#f0c330"/><circle cx="9.3" cy="6.8" r="1.2" fill="#39b54a"/><circle cx="4.8" cy="12.3" r="1.2" fill="#2a74c9"/><path d="M14.6 0.6 L8.6 11.8" stroke="#c9803a" stroke-width="1.8"/><path d="M15 0 L13.2 3.2" stroke="#7a7a7a" stroke-width="1.8"/></svg>
<div class="a" style="left:636px;top:574px;width:20px;height:2px;background:#dba2dc;"></div>
<svg style="left:792px;top:559.5px" width="9" height="6" viewBox="0 0 9 6"><path d="M0.6 5.2 L4.3 1 L8 5.2" fill="none" stroke="#f0f0f0" stroke-width="1.1"/></svg>
<svg style="left:808px;top:555.5px" width="10" height="12" viewBox="0 0 10 12"><rect x="1.5" y="2.5" width="5.5" height="6.5" rx="1" fill="none" stroke="#f0f0f0" stroke-width="0.9"/><path d="M7 4 H9 V6.5 H7 M2 0.8 H7 M1.5 11 H7 M4.3 9 V11" fill="none" stroke="#f0f0f0" stroke-width="0.9"/></svg>
<svg style="left:822px;top:556.5px" width="13" height="11" viewBox="0 0 13 11"><path d="M2.5 7.5 A2.5 2.5 0 0 1 3 2.8 A3.3 3.3 0 0 1 9.2 2.6 A2.5 2.5 0 0 1 9.5 7.5 Z" fill="#bfc3c6"/><circle cx="9.5" cy="8" r="2.8" fill="#e03a3a"/><path d="M8.3 6.8 L10.7 9.2 M10.7 6.8 L8.3 9.2" stroke="#fff" stroke-width="0.8"/></svg>
<svg style="left:839px;top:555px" width="14" height="13" viewBox="0 0 14 13"><rect x="0.5" y="0.5" width="10" height="8.5" fill="none" stroke="#f0f0f0" stroke-width="0.9"/><path d="M2.5 7 L4.5 4 L6 5.8 L7.2 4.5 L8.8 7 Z M3 11 H8 M5.5 9 V11" fill="#f0f0f0" stroke="#f0f0f0" stroke-width="0.7"/><circle cx="10.5" cy="10" r="2.6" fill="#f09a1a"/></svg>
<svg style="left:855px;top:558px" width="11" height="8" viewBox="0 0 13 9"><rect x="2.5" y="1.5" width="9.5" height="5.5" fill="none" stroke="#f0f0f0" stroke-width="0.9"/><rect x="3.8" y="2.8" width="4" height="3" fill="#f0f0f0"/><path d="M0.5 0.5 V4.5 H2.5 M0 0.5 H2.2" fill="none" stroke="#f0f0f0" stroke-width="0.9"/></svg>
<svg style="left:871.5px;top:557px" width="11" height="10" viewBox="0 0 11 10"><path d="M1 9.5 A8.5 8.5 0 0 1 9.5 1 M3.5 9.5 A6 6 0 0 1 9.5 3.5 M6 9.5 A3.5 3.5 0 0 1 9.5 6" fill="none" stroke="#f0f0f0" stroke-width="0.9"/><circle cx="9.3" cy="9.3" r="0.9" fill="#f0f0f0"/></svg>
<svg style="left:886.5px;top:557.3px" width="11.5" height="9.5" viewBox="0 0 14 11"><path d="M0.5 3.8 H2.5 L5 1.2 V9.8 L2.5 7.2 H0.5 Z" fill="none" stroke="#f0f0f0" stroke-width="0.9"/><path d="M6.8 3.6 A2.6 2.6 0 0 1 6.8 7.4 M8.6 2 A5 5 0 0 1 8.6 9 M10.4 0.6 A7 7 0 0 1 10.4 10.4" fill="none" stroke="#f0f0f0" stroke-width="0.9"/></svg>
<div class="t " style="left:901.5px;top:554.7px;transform:scaleX(0.9200);transform-origin:0 50%;font-size:10.5px;color:#fff;">英</div>
<svg style="left:921px;top:557px" width="11" height="10" viewBox="0 0 11 10"><rect x="0.5" y="0.5" width="10" height="9" fill="#f4f4f4"/><path d="M2.5 3.5 C3 2 5 2 6.5 3 L7.5 6.5 M6.2 2.2 L6.5 3.4 L5.2 3.6" fill="none" stroke="#222" stroke-width="0.9"/></svg>
<div class="t" style="left:929.2px;top:551.6px;width:70px;text-align:center;font-size:9.3px;line-height:11.9px;color:#fff;letter-spacing:0;height:24px;transform:scaleX(0.9)">下午 01:50<br>2022/2/2</div>
<svg style="left:997px;top:557px" width="11" height="11" viewBox="0 0 11 11"><path d="M0.5 0.5 H10.5 V8 H6.5 L4.5 10.5 V8 H0.5 Z" fill="#f0f0f0"/><path d="M2.5 2.8 H8.5 M2.5 4.6 H8.5 M2.5 6.2 H6.5" stroke="#1e1f1f" stroke-width="0.7"/></svg>
<div class="a" style="left:91px;top:25.9px;width:284.5px;height:560px;background:#3c3f41;border:1px solid #555759"></div>
<div class="a" style="left:92px;top:26.9px;width:283px;height:19.4px;background:#4b6eaf;"></div>
<div class="t " style="left:111.8px;top:28.8px;transform:scaleX(0.9622);transform-origin:0 50%;color:#c8ccd4">New</div>
<svg style="left:363px;top:33.1px" width="5" height="7" viewBox="0 0 5 7"><path d="M0 0 L5 3.5 L0 7 Z" fill="#fff"/></svg>
<div class="t " style="left:111.8px;top:51.0px;transform:scaleX(0.9874);transform-origin:0 50%;color:#b4b4b4">Add C++ to Module</div>
<div class="a" style="left:92px;top:69px;width:283px;height:1px;background:#4f5254;"></div>
<div class="t " style="left:111.8px;top:72.7px;transform:scaleX(0.9211);transform-origin:0 50%;color:#b4b4b4">Cu<u>t</u></div>
<div class="t r" style="right:658px;top:72.7px;transform:scaleX(0.9503);transform-origin:100% 50%;color:#a7a9ab">Ctrl+X</div>
<div class="t " style="left:111.8px;top:92.2px;transform:scaleX(0.9352);transform-origin:0 50%;color:#b4b4b4"><u>C</u>opy</div>
<div class="t r" style="right:658px;top:92.2px;transform:scaleX(0.9319);transform-origin:100% 50%;color:#a7a9ab">Ctrl+C</div>
<div class="t " style="left:111.8px;top:111.5px;transform:scaleX(0.8995);transform-origin:0 50%;color:#b4b4b4">Copy Path...</div>
<div class="t " style="left:111.8px;top:131.0px;transform:scaleX(0.8636);transform-origin:0 50%;color:#b4b4b4"><u>P</u>aste</div>
<div class="t r" style="right:658px;top:131.0px;transform:scaleX(0.9503);transform-origin:100% 50%;color:#a7a9ab">Ctrl+V</div>
<div class="a" style="left:92px;top:149px;width:283px;height:1px;background:#4f5254;"></div>
<div class="t " style="left:111.8px;top:153.0px;transform:scaleX(0.9025);transform-origin:0 50%;color:#b4b4b4">Find <u>U</u>sages</div>
<div class="t r" style="right:658px;top:153.0px;transform:scaleX(0.9710);transform-origin:100% 50%;color:#a7a9ab">Alt+F7</div>
<div class="t " style="left:111.8px;top:172.29999999999998px;transform:scaleX(0.8863);transform-origin:0 50%;color:#b4b4b4">Find in Files...</div>
<div class="t r" style="right:658px;top:172.29999999999998px;transform:scaleX(0.9559);transform-origin:100% 50%;color:#a7a9ab">Ctrl+Shift+F</div>
<div class="t " style="left:111.8px;top:191.6px;transform:scaleX(0.8776);transform-origin:0 50%;color:#b4b4b4">Repl<u>a</u>ce in Files...</div>
<div class="t r" style="right:658px;top:191.6px;transform:scaleX(0.9532);transform-origin:100% 50%;color:#a7a9ab">Ctrl+Shift+R</div>
<div class="t " style="left:111.8px;top:211.0px;transform:scaleX(0.9135);transform-origin:0 50%;color:#b4b4b4">Analy<u>z</u>e</div>
<svg style="left:363px;top:215.3px" width="5" height="7" viewBox="0 0 5 7"><path d="M0 0 L5 3.5 L0 7 Z" fill="#a8a8a8"/></svg>
<div class="a" style="left:92px;top:229.5px;width:283px;height:1px;background:#4f5254;"></div>
<div class="t " style="left:111.8px;top:233.0px;transform:scaleX(0.9283);transform-origin:0 50%;color:#b4b4b4"><u>R</u>efactor</div>
<svg style="left:363px;top:237.3px" width="5" height="7" viewBox="0 0 5 7"><path d="M0 0 L5 3.5 L0 7 Z" fill="#a8a8a8"/></svg>
<div class="a" style="left:92px;top:251.5px;width:283px;height:1px;background:#4f5254;"></div>
<div class="t " style="left:111.8px;top:255.0px;transform:scaleX(0.9419);transform-origin:0 50%;color:#b4b4b4">Add to F<u>a</u>vorites</div>
<svg style="left:363px;top:259.3px" width="5" height="7" viewBox="0 0 5 7"><path d="M0 0 L5 3.5 L0 7 Z" fill="#a8a8a8"/></svg>
<div class="t " style="left:111.8px;top:274.2px;transform:scaleX(0.9129);transform-origin:0 50%;color:#b4b4b4">Show In Resource Manager</div>
<div class="t r" style="right:658px;top:274.2px;transform:scaleX(0.9559);transform-origin:100% 50%;color:#a7a9ab">Ctrl+Shift+T</div>
<div class="a" style="left:92px;top:293px;width:283px;height:1px;background:#4f5254;"></div>
<div class="t " style="left:111.8px;top:296.59999999999997px;transform:scaleX(0.9377);transform-origin:0 50%;color:#b4b4b4"><u>R</u>eformat Code</div>
<div class="t r" style="right:658px;top:296.59999999999997px;transform:scaleX(0.9671);transform-origin:100% 50%;color:#a7a9ab">Ctrl+Alt+L</div>
<div class="t " style="left:111.8px;top:315.9px;transform:scaleX(0.9726);transform-origin:0 50%;color:#b4b4b4">Optimi<u>z</u>e Imports</div>
<div class="t r" style="right:658px;top:315.9px;transform:scaleX(0.9854);transform-origin:100% 50%;color:#a7a9ab">Ctrl+Alt+O</div>
<div class="t " style="left:111.8px;top:335.4px;transform:scaleX(0.8906);transform-origin:0 50%;color:#b4b4b4"><u>D</u>elete...</div>
<div class="t r" style="right:658px;top:335.4px;transform:scaleX(0.9138);transform-origin:100% 50%;color:#a7a9ab">Delete</div>
<div class="a" style="left:92px;top:353px;width:283px;height:1px;background:#4f5254;"></div>
<div class="t " style="left:111.8px;top:356.8px;transform:scaleX(0.9335);transform-origin:0 50%;color:#b4b4b4">R<u>u</u>n 'Tests in 'layout''</div>
<div class="t r" style="right:658px;top:356.8px;transform:scaleX(0.9565);transform-origin:100% 50%;color:#a7a9ab">Ctrl+Shift+F10</div>
<div class="t " style="left:111.8px;top:376.59999999999997px;transform:scaleX(0.9524);transform-origin:0 50%;color:#b4b4b4"><u>D</u>ebug 'Tests in 'layout''</div>
<div class="t " style="left:111.8px;top:395.9px;transform:scaleX(0.9308);transform-origin:0 50%;color:#b4b4b4">Run 'Tests in 'layout'' with C<u>o</u>verage</div>
<div class="t " style="left:111.8px;top:415.0px;transform:scaleX(0.9477);transform-origin:0 50%;color:#b4b4b4">Modify Run Configuration...</div>
<div class="a" style="left:92px;top:433.3px;width:283px;height:1px;background:#4f5254;"></div>
<div class="t " style="left:111.8px;top:437.0px;transform:scaleX(0.9321);transform-origin:0 50%;color:#b4b4b4">Open In</div>
<svg style="left:363px;top:441.3px" width="5" height="7" viewBox="0 0 5 7"><path d="M0 0 L5 3.5 L0 7 Z" fill="#a8a8a8"/></svg>
<div class="a" style="left:92px;top:455.4px;width:283px;height:1px;background:#4f5254;"></div>
<div class="t " style="left:111.8px;top:459.2px;transform:scaleX(0.9256);transform-origin:0 50%;color:#b4b4b4">Local <u>H</u>istory</div>
<svg style="left:363px;top:463.5px" width="5" height="7" viewBox="0 0 5 7"><path d="M0 0 L5 3.5 L0 7 Z" fill="#a8a8a8"/></svg>
<div class="t " style="left:111.8px;top:478.4px;transform:scaleX(0.9399);transform-origin:0 50%;color:#b4b4b4">Reload from Disk</div>
<div class="a" style="left:92px;top:496.5px;width:283px;height:1px;background:#4f5254;"></div>
<div class="t " style="left:111.8px;top:500.09999999999997px;transform:scaleX(0.9263);transform-origin:0 50%;color:#b4b4b4">Compare With...</div>
<div class="t r" style="right:658px;top:500.09999999999997px;transform:scaleX(0.9582);transform-origin:100% 50%;color:#a7a9ab">Ctrl+D</div>
<div class="a" style="left:92px;top:518.5px;width:283px;height:1px;background:#4f5254;"></div>
<div class="t " style="left:111.8px;top:522.4000000000001px;transform:scaleX(0.9232);transform-origin:0 50%;color:#b4b4b4">Mark Directory as</div>
<svg style="left:363px;top:526.7px" width="5" height="7" viewBox="0 0 5 7"><path d="M0 0 L5 3.5 L0 7 Z" fill="#a8a8a8"/></svg>
<div class="t " style="left:111.8px;top:541.6px;transform:scaleX(0.9117);transform-origin:0 50%;color:#b4b4b4">Remove BOM</div>
<div class="t " style="left:111.8px;top:561.0px;transform:scaleX(0.9342);transform-origin:0 50%;color:#b4b4b4">Add BOM</div>
<svg style="left:230px;top:567.5px" width="7" height="4" viewBox="0 0 7 4"><path d="M0 0 H7 L3.5 4 Z" fill="#b4b4b4"/></svg>
<svg style="left:96px;top:75px" width="12" height="11" viewBox="0 0 12 11"><path d="M4 4 L11 10 M4 7 L11 1" stroke="#c4c4c4" stroke-width="1.3"/><circle cx="2.3" cy="2.8" r="1.7" fill="none" stroke="#c4c4c4" stroke-width="1.2"/><circle cx="2.3" cy="8.2" r="1.7" fill="none" stroke="#c4c4c4" stroke-width="1.2"/></svg>
<svg style="left:96px;top:94px" width="11" height="12" viewBox="0 0 11 12"><path d="M0.6 8 V0.6 H7" fill="none" stroke="#c4c4c4" stroke-width="1.2"/><rect x="2.6" y="2.6" width="8" height="9" fill="#c4c4c4"/><path d="M4.2 5 H9 M4.2 7 H9 M4.2 9 H9" stroke="#3c3f41" stroke-width="0.8"/></svg>
<svg style="left:97px;top:132.5px" width="9" height="12" viewBox="0 0 9 12"><rect x="0.7" y="1.7" width="7.6" height="9.6" rx="0.8" fill="none" stroke="#c4c4c4" stroke-width="1.4"/><rect x="2.5" y="0" width="4" height="3" fill="#c4c4c4"/></svg>
<svg style="left:96.5px;top:275.5px" width="10" height="10" viewBox="0 0 10 10"><path d="M5 0 L8 4.5 H2 Z" fill="#c4c4c4"/><rect x="0.5" y="5.5" width="4" height="4" fill="#c4c4c4"/><circle cx="7.5" cy="7.5" r="2.2" fill="#c4c4c4"/></svg>
<svg style="left:97px;top:359px" width="10" height="11" viewBox="0 0 10 11"><path d="M0.5 0.5 L9.5 5.5 L0.5 10.5 Z" fill="#57a64a"/></svg>
<svg style="left:95.5px;top:378.5px" width="12" height="12" viewBox="0 0 12 12"><ellipse cx="6" cy="7" rx="3.3" ry="4" fill="#57a64a"/><circle cx="6" cy="2.6" r="1.9" fill="#57a64a"/><path d="M0.8 4 L3 5.5 M11.2 4 L9 5.5 M0.3 7.5 H3 M11.7 7.5 H9 M1 11.3 L3.2 9.5 M11 11.3 L8.8 9.5" stroke="#57a64a" stroke-width="1.1"/></svg>
<svg style="left:95px;top:398px" width="13" height="12" viewBox="0 0 13 12"><path d="M1 1 H8.5 V6 C8.5 9 6 10.5 4.7 11 C3.4 10.5 1 9 1 6 Z" fill="#c4c4c4"/><path d="M4.7 1 V11 C3.4 10.5 1 9 1 6 V1 Z" fill="#8c8f91"/><path d="M6.5 5.5 L12.5 8.8 L6.5 12 Z" fill="#57a64a" stroke="#3c3f41" stroke-width="0.6"/></svg>
<svg style="left:96px;top:480.5px" width="11" height="11" viewBox="0 0 11 11"><path d="M9.3 3.8 A4.3 4.3 0 0 0 1.6 3.6 M1.7 7.2 A4.3 4.3 0 0 0 9.4 7.4" fill="none" stroke="#c4c4c4" stroke-width="1.4"/><path d="M0.3 1.2 V4.6 H3.6 Z M10.7 9.8 V6.4 H7.4 Z" fill="#c4c4c4"/></svg>
<svg style="left:95.5px;top:502px" width="12" height="11" viewBox="0 0 12 11"><path d="M6.5 4.5 L11 0.5 M6.5 4.5 V1.2 M6.5 4.5 H10 M5.5 6.5 L1 10.5 M5.5 6.5 V9.8 M5.5 6.5 H2" stroke="#3d9ad1" stroke-width="1.5" fill="none"/></svg>
<div class="a" style="left:372px;top:23.7px;width:214px;height:494.4px;background:#3c3f41;border:1px solid #555759;border-right-color:#46484a;border-bottom-color:#4c4e50"></div>
<div class="a" style="left:373px;top:47.3px;width:212px;height:19.3px;background:#4b6eaf;"></div>
<svg style="left:376.3px;top:29.0px" width="13" height="13" viewBox="0 0 13 13"><path d="M4 0.5 H9.5 V12 H1.5 V3 Z" fill="#9aa7b0"/><path d="M4 0.5 V3 H1.5 Z" fill="#3c3f41" opacity=".55"/><rect x="5.2" y="5.2" width="8" height="8" fill="#3c3f41"/><path d="M6.2 6.2 H12.7 L6.2 12.7 Z" fill="#6f7bf0"/><path d="M9.4 6.2 H12.7 L9.4 9.5 Z" fill="#f08a24"/><path d="M6.2 6.2 H9.4 L6.2 9.4 Z" fill="#c757bc"/><path d="M9.45 9.45 L12.7 12.7 H6.2 Z" fill="#2aa4e8"/></svg>
<div class="t " style="left:392.6px;top:27.2px;transform:scaleX(0.9102);transform-origin:0 50%;color:#b4b4b4">Kotlin Class/File</div>
<svg style="left:376.1px;top:51.2px" width="12.5" height="12" viewBox="0 0 12.5 12"><path d="M5 0 H9.8 V6.2 H2.6 V2.4 Z" fill="#9aa7b0"/><path d="M5 0 V2.4 H2.6 Z" fill="#3c3f41" opacity=".5"/><rect x="0" y="6.8" width="12.5" height="5" fill="#c9673a"/><path d="M4.6 7.8 L3.1 9.3 L4.6 10.8 M7.9 7.8 L9.4 9.3 L7.9 10.8" stroke="#4a2410" stroke-width="1" fill="none"/></svg>
<div class="t " style="left:392.6px;top:49.400000000000006px;transform:scaleX(0.9013);transform-origin:0 50%;color:#c4c8d0">Layout Resource File</div>
<svg style="left:376.55px;top:71.75px" width="11.5" height="9.5" viewBox="0 0 12 10"><path d="M0 0.5 H4.6 L6 2 H12 V10 H0 Z" fill="#9aa7b0"/></svg>
<div class="t " style="left:392.6px;top:68.7px;transform:scaleX(0.9278);transform-origin:0 50%;color:#b4b4b4">Sample Data Directory</div>
<svg style="left:377.3px;top:90px" width="10" height="12" viewBox="0 0 10 12"><path d="M3.5 0.3 H9 V11.7 H1 V3 Z" fill="#9aa7b0"/><path d="M3.5 0.3 V3 H1 Z" fill="#3c3f41" opacity=".55"/><path d="M2.6 6.6 H7.4 M2.6 9 H7.4" stroke="#3c3f41" stroke-width="1"/></svg>
<div class="t " style="left:392.6px;top:88.2px;transform:scaleX(0.8895);transform-origin:0 50%;color:#b4b4b4">File</div>
<svg style="left:376.8px;top:110px" width="10" height="12" viewBox="0 0 10 12"><path d="M3.5 0.3 H9 V11.7 H1 V3 Z" fill="#9aa7b0"/><path d="M3.5 0.3 V3 H1 Z" fill="#3c3f41" opacity=".55"/><path d="M2.6 6.6 H7.4 M2.6 9 H7.4" stroke="#3c3f41" stroke-width="1"/></svg>
<div class="a" style="left:383.3px;top:108.3px;width:5.2px;height:5.2px;border-radius:50%;background:#3ba7e0;box-shadow:0 0 0 0.7px #3c3f41"></div>
<div class="t " style="left:392.6px;top:107.3px;transform:scaleX(0.8855);transform-origin:0 50%;color:#b4b4b4">Scratch File</div>
<div class="t r" style="right:448.20000000000005px;top:107.3px;transform:scaleX(0.9739);transform-origin:100% 50%;color:#a7a9ab">Ctrl+Alt+Shift+Insert</div>
<svg style="left:376.55px;top:129.75px" width="11.5" height="9.5" viewBox="0 0 12 10"><path d="M0 0.5 H4.6 L6 2 H12 V10 H0 Z" fill="#9aa7b0"/></svg>
<div class="t " style="left:392.6px;top:126.89999999999999px;transform:scaleX(0.9582);transform-origin:0 50%;color:#b4b4b4">Directory</div>
<svg style="left:376.2px;top:148.0px" width="12" height="12" viewBox="0 0 14 14"><path d="M1 11 A6 5.6 0 0 1 13 11 Z" fill="#3ddc84"/><path d="M3.6 6.2 L2.2 3.9 M10.4 6.2 L11.8 3.9" stroke="#3ddc84" stroke-width="1" stroke-linecap="round"/><circle cx="4.6" cy="8.6" r=".7" fill="#3c3f41"/><circle cx="9.4" cy="8.6" r=".7" fill="#3c3f41"/></svg>
<div class="t " style="left:392.6px;top:146.2px;transform:scaleX(0.9313);transform-origin:0 50%;color:#b4b4b4">Image Asset</div>
<svg style="left:376.2px;top:167.0px" width="12" height="12" viewBox="0 0 14 14"><path d="M1 11 A6 5.6 0 0 1 13 11 Z" fill="#3ddc84"/><path d="M3.6 6.2 L2.2 3.9 M10.4 6.2 L11.8 3.9" stroke="#3ddc84" stroke-width="1" stroke-linecap="round"/><circle cx="4.6" cy="8.6" r=".7" fill="#3c3f41"/><circle cx="9.4" cy="8.6" r=".7" fill="#3c3f41"/></svg>
<div class="t " style="left:392.6px;top:165.2px;transform:scaleX(0.9310);transform-origin:0 50%;color:#b4b4b4">Vector Asset</div>
<div class="a" style="left:373px;top:184px;width:212px;height:1px;background:#4f5254;"></div>
<svg style="left:376.3px;top:189.0px" width="13" height="13" viewBox="0 0 13 13"><path d="M4 0.5 H9.5 V12 H1.5 V3 Z" fill="#9aa7b0"/><path d="M4 0.5 V3 H1.5 Z" fill="#3c3f41" opacity=".55"/><rect x="5.2" y="5.2" width="8" height="8" fill="#3c3f41"/><path d="M6.2 6.2 H12.7 L6.2 12.7 Z" fill="#6f7bf0"/><path d="M9.4 6.2 H12.7 L9.4 9.5 Z" fill="#f08a24"/><path d="M6.2 6.2 H9.4 L6.2 9.4 Z" fill="#c757bc"/><path d="M9.45 9.45 L12.7 12.7 H6.2 Z" fill="#2aa4e8"/></svg>
<div class="t " style="left:392.6px;top:187.39999999999998px;transform:scaleX(0.9387);transform-origin:0 50%;color:#b4b4b4">Kotlin Script</div>
<svg style="left:376.3px;top:208.5px" width="13" height="13" viewBox="0 0 13 13"><path d="M4 0.5 H9.5 V12 H1.5 V3 Z" fill="#9aa7b0"/><path d="M4 0.5 V3 H1.5 Z" fill="#3c3f41" opacity=".55"/><rect x="5.2" y="5.2" width="8" height="8" fill="#3c3f41"/><path d="M6.2 6.2 H12.7 L6.2 12.7 Z" fill="#6f7bf0"/><path d="M9.4 6.2 H12.7 L9.4 9.5 Z" fill="#f08a24"/><path d="M6.2 6.2 H9.4 L6.2 9.4 Z" fill="#c757bc"/><path d="M9.45 9.45 L12.7 12.7 H6.2 Z" fill="#2aa4e8"/></svg>
<div class="t " style="left:392.6px;top:206.7px;transform:scaleX(0.9449);transform-origin:0 50%;color:#b4b4b4">Kotlin Worksheet</div>
<div class="a" style="left:373px;top:225.2px;width:212px;height:1px;background:#4f5254;"></div>
<svg style="left:376.2px;top:230.4px" width="12" height="12" viewBox="0 0 14 14"><path d="M1 11 A6 5.6 0 0 1 13 11 Z" fill="#3ddc84"/><path d="M3.6 6.2 L2.2 3.9 M10.4 6.2 L11.8 3.9" stroke="#3ddc84" stroke-width="1" stroke-linecap="round"/><circle cx="4.6" cy="8.6" r=".7" fill="#3c3f41"/><circle cx="9.4" cy="8.6" r=".7" fill="#3c3f41"/></svg>
<div class="t " style="left:392.6px;top:228.6px;transform:scaleX(0.9604);transform-origin:0 50%;color:#b4b4b4">Activity</div>
<svg style="left:573.7px;top:232.9px" width="5" height="7" viewBox="0 0 5 7"><path d="M0 0 L5 3.5 L0 7 Z" fill="#a8a8a8"/></svg>
<svg style="left:376.2px;top:249.8px" width="12" height="12" viewBox="0 0 14 14"><path d="M1 11 A6 5.6 0 0 1 13 11 Z" fill="#3ddc84"/><path d="M3.6 6.2 L2.2 3.9 M10.4 6.2 L11.8 3.9" stroke="#3ddc84" stroke-width="1" stroke-linecap="round"/><circle cx="4.6" cy="8.6" r=".7" fill="#3c3f41"/><circle cx="9.4" cy="8.6" r=".7" fill="#3c3f41"/></svg>
<div class="t " style="left:392.6px;top:248.0px;transform:scaleX(0.9464);transform-origin:0 50%;color:#b4b4b4">Fragment</div>
<svg style="left:573.7px;top:252.3px" width="5" height="7" viewBox="0 0 5 7"><path d="M0 0 L5 3.5 L0 7 Z" fill="#a8a8a8"/></svg>
<svg style="left:376.2px;top:269.1px" width="12" height="12" viewBox="0 0 14 14"><path d="M1 11 A6 5.6 0 0 1 13 11 Z" fill="#3ddc84"/><path d="M3.6 6.2 L2.2 3.9 M10.4 6.2 L11.8 3.9" stroke="#3ddc84" stroke-width="1" stroke-linecap="round"/><circle cx="4.6" cy="8.6" r=".7" fill="#3c3f41"/><circle cx="9.4" cy="8.6" r=".7" fill="#3c3f41"/></svg>
<div class="t " style="left:392.6px;top:267.3px;transform:scaleX(0.9466);transform-origin:0 50%;color:#b4b4b4">Folder</div>
<svg style="left:573.7px;top:271.6px" width="5" height="7" viewBox="0 0 5 7"><path d="M0 0 L5 3.5 L0 7 Z" fill="#a8a8a8"/></svg>
<svg style="left:376.2px;top:288.7px" width="12" height="12" viewBox="0 0 14 14"><path d="M1 11 A6 5.6 0 0 1 13 11 Z" fill="#3ddc84"/><path d="M3.6 6.2 L2.2 3.9 M10.4 6.2 L11.8 3.9" stroke="#3ddc84" stroke-width="1" stroke-linecap="round"/><circle cx="4.6" cy="8.6" r=".7" fill="#3c3f41"/><circle cx="9.4" cy="8.6" r=".7" fill="#3c3f41"/></svg>
<div class="t " style="left:392.6px;top:286.9px;transform:scaleX(0.8672);transform-origin:0 50%;color:#b4b4b4">Service</div>
<svg style="left:573.7px;top:291.2px" width="5" height="7" viewBox="0 0 5 7"><path d="M0 0 L5 3.5 L0 7 Z" fill="#a8a8a8"/></svg>
<svg style="left:376.2px;top:308.0px" width="12" height="12" viewBox="0 0 14 14"><path d="M1 11 A6 5.6 0 0 1 13 11 Z" fill="#3ddc84"/><path d="M3.6 6.2 L2.2 3.9 M10.4 6.2 L11.8 3.9" stroke="#3ddc84" stroke-width="1" stroke-linecap="round"/><circle cx="4.6" cy="8.6" r=".7" fill="#3c3f41"/><circle cx="9.4" cy="8.6" r=".7" fill="#3c3f41"/></svg>
<div class="t " style="left:392.6px;top:306.2px;transform:scaleX(0.9717);transform-origin:0 50%;color:#b4b4b4">UiComponent</div>
<svg style="left:573.7px;top:310.5px" width="5" height="7" viewBox="0 0 5 7"><path d="M0 0 L5 3.5 L0 7 Z" fill="#a8a8a8"/></svg>
<svg style="left:376.2px;top:327.3px" width="12" height="12" viewBox="0 0 14 14"><path d="M1 11 A6 5.6 0 0 1 13 11 Z" fill="#3ddc84"/><path d="M3.6 6.2 L2.2 3.9 M10.4 6.2 L11.8 3.9" stroke="#3ddc84" stroke-width="1" stroke-linecap="round"/><circle cx="4.6" cy="8.6" r=".7" fill="#3c3f41"/><circle cx="9.4" cy="8.6" r=".7" fill="#3c3f41"/></svg>
<div class="t " style="left:392.6px;top:325.5px;transform:scaleX(0.9912);transform-origin:0 50%;color:#b4b4b4">Automotive</div>
<svg style="left:573.7px;top:329.8px" width="5" height="7" viewBox="0 0 5 7"><path d="M0 0 L5 3.5 L0 7 Z" fill="#a8a8a8"/></svg>
<svg style="left:376.2px;top:346.4px" width="12" height="12" viewBox="0 0 14 14"><path d="M1 11 A6 5.6 0 0 1 13 11 Z" fill="#3ddc84"/><path d="M3.6 6.2 L2.2 3.9 M10.4 6.2 L11.8 3.9" stroke="#3ddc84" stroke-width="1" stroke-linecap="round"/><circle cx="4.6" cy="8.6" r=".7" fill="#3c3f41"/><circle cx="9.4" cy="8.6" r=".7" fill="#3c3f41"/></svg>
<div class="t " style="left:392.6px;top:344.59999999999997px;transform:scaleX(0.9159);transform-origin:0 50%;color:#b4b4b4">XML</div>
<svg style="left:573.7px;top:348.9px" width="5" height="7" viewBox="0 0 5 7"><path d="M0 0 L5 3.5 L0 7 Z" fill="#a8a8a8"/></svg>
<svg style="left:376.2px;top:365.7px" width="12" height="12" viewBox="0 0 14 14"><path d="M1 11 A6 5.6 0 0 1 13 11 Z" fill="#3ddc84"/><path d="M3.6 6.2 L2.2 3.9 M10.4 6.2 L11.8 3.9" stroke="#3ddc84" stroke-width="1" stroke-linecap="round"/><circle cx="4.6" cy="8.6" r=".7" fill="#3c3f41"/><circle cx="9.4" cy="8.6" r=".7" fill="#3c3f41"/></svg>
<div class="t " style="left:392.6px;top:363.9px;transform:scaleX(0.9278);transform-origin:0 50%;color:#b4b4b4">Wear</div>
<svg style="left:573.7px;top:368.2px" width="5" height="7" viewBox="0 0 5 7"><path d="M0 0 L5 3.5 L0 7 Z" fill="#a8a8a8"/></svg>
<svg style="left:376.2px;top:385.3px" width="12" height="12" viewBox="0 0 14 14"><path d="M1 11 A6 5.6 0 0 1 13 11 Z" fill="#3ddc84"/><path d="M3.6 6.2 L2.2 3.9 M10.4 6.2 L11.8 3.9" stroke="#3ddc84" stroke-width="1" stroke-linecap="round"/><circle cx="4.6" cy="8.6" r=".7" fill="#3c3f41"/><circle cx="9.4" cy="8.6" r=".7" fill="#3c3f41"/></svg>
<div class="t " style="left:392.6px;top:383.5px;transform:scaleX(0.9034);transform-origin:0 50%;color:#b4b4b4">AIDL</div>
<svg style="left:573.7px;top:387.8px" width="5" height="7" viewBox="0 0 5 7"><path d="M0 0 L5 3.5 L0 7 Z" fill="#a8a8a8"/></svg>
<svg style="left:376.2px;top:404.6px" width="12" height="12" viewBox="0 0 14 14"><path d="M1 11 A6 5.6 0 0 1 13 11 Z" fill="#3ddc84"/><path d="M3.6 6.2 L2.2 3.9 M10.4 6.2 L11.8 3.9" stroke="#3ddc84" stroke-width="1" stroke-linecap="round"/><circle cx="4.6" cy="8.6" r=".7" fill="#3c3f41"/><circle cx="9.4" cy="8.6" r=".7" fill="#3c3f41"/></svg>
<div class="t " style="left:392.6px;top:402.8px;transform:scaleX(0.9934);transform-origin:0 50%;color:#b4b4b4">Widget</div>
<svg style="left:573.7px;top:407.1px" width="5" height="7" viewBox="0 0 5 7"><path d="M0 0 L5 3.5 L0 7 Z" fill="#a8a8a8"/></svg>
<svg style="left:376.2px;top:423.9px" width="12" height="12" viewBox="0 0 14 14"><path d="M1 11 A6 5.6 0 0 1 13 11 Z" fill="#3ddc84"/><path d="M3.6 6.2 L2.2 3.9 M10.4 6.2 L11.8 3.9" stroke="#3ddc84" stroke-width="1" stroke-linecap="round"/><circle cx="4.6" cy="8.6" r=".7" fill="#3c3f41"/><circle cx="9.4" cy="8.6" r=".7" fill="#3c3f41"/></svg>
<div class="t " style="left:392.6px;top:422.09999999999997px;transform:scaleX(0.9717);transform-origin:0 50%;color:#b4b4b4">Google</div>
<svg style="left:573.7px;top:426.4px" width="5" height="7" viewBox="0 0 5 7"><path d="M0 0 L5 3.5 L0 7 Z" fill="#a8a8a8"/></svg>
<svg style="left:376.2px;top:443.2px" width="12" height="12" viewBox="0 0 14 14"><path d="M1 11 A6 5.6 0 0 1 13 11 Z" fill="#3ddc84"/><path d="M3.6 6.2 L2.2 3.9 M10.4 6.2 L11.8 3.9" stroke="#3ddc84" stroke-width="1" stroke-linecap="round"/><circle cx="4.6" cy="8.6" r=".7" fill="#3c3f41"/><circle cx="9.4" cy="8.6" r=".7" fill="#3c3f41"/></svg>
<div class="t " style="left:392.6px;top:441.4px;transform:scaleX(0.9463);transform-origin:0 50%;color:#b4b4b4">Compose</div>
<svg style="left:573.7px;top:445.7px" width="5" height="7" viewBox="0 0 5 7"><path d="M0 0 L5 3.5 L0 7 Z" fill="#a8a8a8"/></svg>
<svg style="left:376.2px;top:462.5px" width="12" height="12" viewBox="0 0 14 14"><path d="M1 11 A6 5.6 0 0 1 13 11 Z" fill="#3ddc84"/><path d="M3.6 6.2 L2.2 3.9 M10.4 6.2 L11.8 3.9" stroke="#3ddc84" stroke-width="1" stroke-linecap="round"/><circle cx="4.6" cy="8.6" r=".7" fill="#3c3f41"/><circle cx="9.4" cy="8.6" r=".7" fill="#3c3f41"/></svg>
<div class="t " style="left:392.6px;top:460.7px;transform:scaleX(0.9463);transform-origin:0 50%;color:#b4b4b4">Other</div>
<svg style="left:573.7px;top:465.0px" width="5" height="7" viewBox="0 0 5 7"><path d="M0 0 L5 3.5 L0 7 Z" fill="#a8a8a8"/></svg>
<svg style="left:382.3px;top:488.2px" width="1" height="1" viewBox="0 0 1 1"><g><path d="M-2.00 -2.75 L-1.30 -5.00 H1.30 L2.00 -2.75 Z" fill="#9aa7b0" transform="rotate(0)"/><path d="M-2.00 -2.75 L-1.30 -5.00 H1.30 L2.00 -2.75 Z" fill="#9aa7b0" transform="rotate(60)"/><path d="M-2.00 -2.75 L-1.30 -5.00 H1.30 L2.00 -2.75 Z" fill="#9aa7b0" transform="rotate(120)"/><path d="M-2.00 -2.75 L-1.30 -5.00 H1.30 L2.00 -2.75 Z" fill="#9aa7b0" transform="rotate(180)"/><path d="M-2.00 -2.75 L-1.30 -5.00 H1.30 L2.00 -2.75 Z" fill="#9aa7b0" transform="rotate(240)"/><path d="M-2.00 -2.75 L-1.30 -5.00 H1.30 L2.00 -2.75 Z" fill="#9aa7b0" transform="rotate(300)"/><circle r="3.50" fill="#9aa7b0"/><circle r="1.60" fill="#3c3f41"/></g></svg>
<div class="t " style="left:392.6px;top:480.0px;transform:scaleX(0.9413);transform-origin:0 50%;color:#b4b4b4">EditorConfig File</div>
<svg style="left:376.8px;top:500.8px" width="11" height="12" viewBox="0 0 11 12"><path d="M3.2 0 H8 V11 H0.8 V2.6 Z" fill="#9aa7b0"/><path d="M3.2 0 V2.6 H0.8 Z" fill="#3c3f41" opacity=".5"/><rect x="3.4" y="4.4" width="8" height="8" fill="#3c3f41"/><rect x="4.2" y="8" width="1.9" height="4" fill="#e8743b"/><rect x="6.5" y="6.5" width="1.9" height="5.5" fill="#e8b53b"/><rect x="8.8" y="5" width="1.9" height="7" fill="#62b543"/></svg>
<div class="t " style="left:392.6px;top:499.2px;transform:scaleX(0.9070);transform-origin:0 50%;color:#b4b4b4">Resource Bundle</div>
</body></html>
